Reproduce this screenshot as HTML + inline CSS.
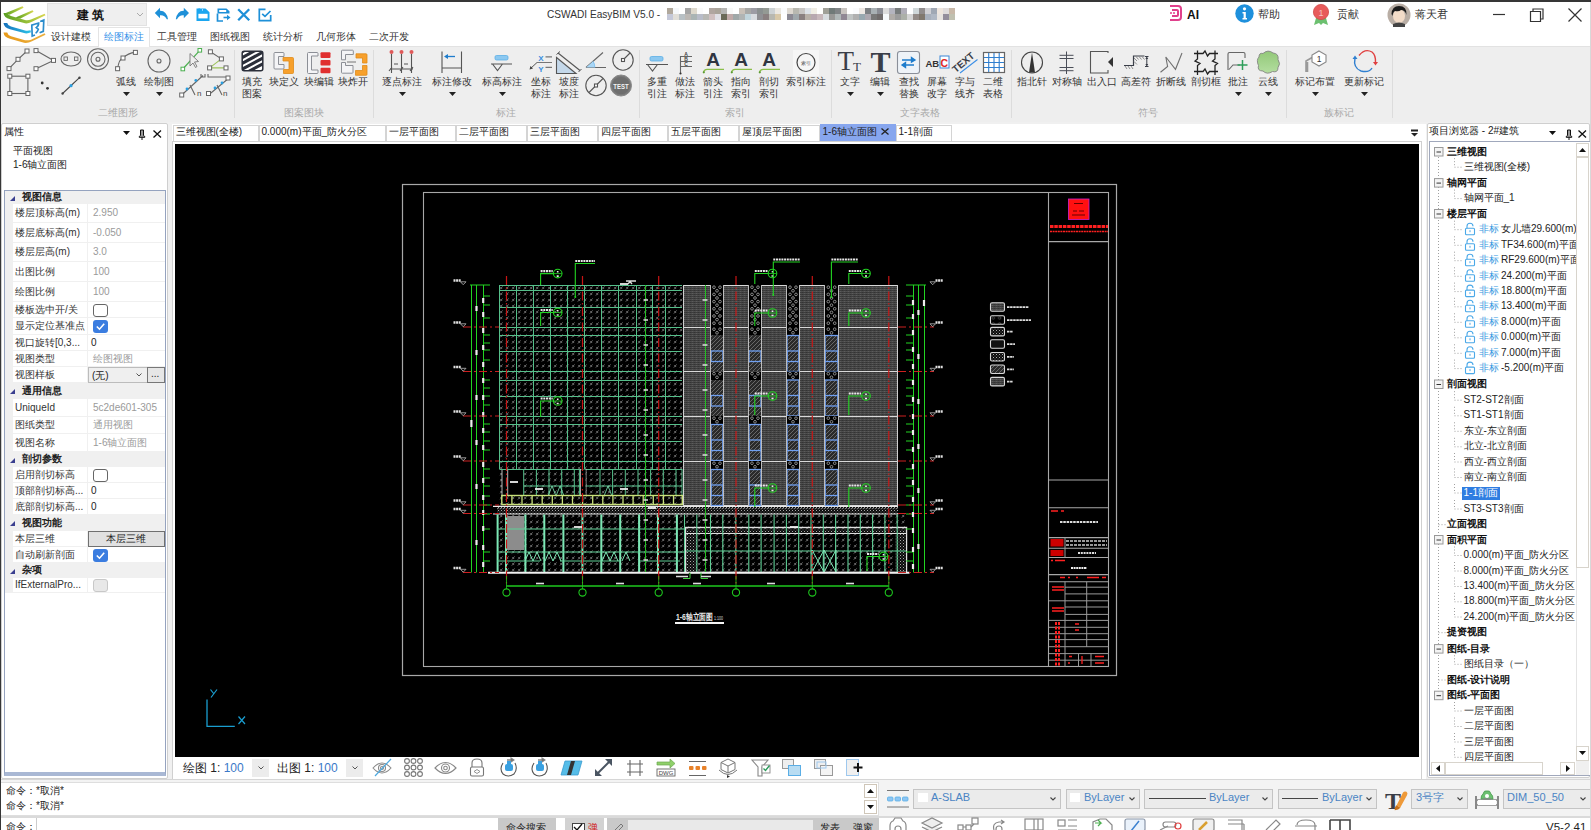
<!DOCTYPE html>
<html><head><meta charset="utf-8">
<style>
*{box-sizing:border-box}
html,body{margin:0;padding:0}
body{width:1591px;height:830px;overflow:hidden;position:relative;background:#f0f0f0;font-family:"Liberation Sans",sans-serif;font-size:12px;color:#222}
.a{position:absolute}
.t{position:absolute;white-space:nowrap;line-height:1}
svg{position:absolute;overflow:visible}
.rl{font-size:10px;color:#333}
.gl{font-size:10px;color:#a8a8a8}

</style></head><body>
<!-- window borders -->
<div class="a" style="left:0;top:0;width:1591px;height:2px;background:#363636;z-index:50"></div>
<div class="a" style="left:0;top:0;width:1px;height:830px;background:#363636;z-index:50"></div>
<div class="a" style="left:1590px;top:2px;width:1px;height:828px;background:#d8d8d8;z-index:50"></div>

<!-- title + tabs white area -->
<div class="a" style="left:0;top:2px;width:1591px;height:44px;background:#fff"></div>
<!-- ribbon body -->
<div class="a" style="left:0;top:46px;width:1591px;height:76px;background:#eeeeee;border-top:1px solid #e2e2e2"></div>


<!-- ===== TITLE BAR ===== -->
<svg style="left:0;top:0" width="50" height="46" viewBox="0 0 50 46">
 <defs>
  <linearGradient id="lg1" x1="0" x2="1"><stop offset="0" stop-color="#5a9e22"/><stop offset="0.6" stop-color="#9cc23a"/><stop offset="1" stop-color="#d9d650"/></linearGradient>
  <linearGradient id="lg2" x1="0" x2="1"><stop offset="0" stop-color="#1670bb"/><stop offset="1" stop-color="#2cc4e8"/></linearGradient>
  <linearGradient id="lg3" x1="0" x2="1"><stop offset="0" stop-color="#e89a18"/><stop offset="1" stop-color="#eab040"/></linearGradient>
 </defs>
 <path d="M3.5,13 Q4,17.8 10,19.3 L25,23.3 Q28,23.8 32,21.8 L45.5,15.2 L44.6,13.8 L31,19.6 Q28,20.6 25,20.1 L11,16 Q8,15 7.2,13 Z" fill="url(#lg1)"/>
 <path d="M4.5,13.5 L22.5,6.2 L23.6,7.8 L9.5,14.8 Z" fill="url(#lg1)"/>
 <path d="M15.5,17.6 L32.5,10.2 L33.6,11.8 L20,18.8 Z" fill="url(#lg1)"/>
 <path d="M3.5,23 Q4,27.8 10,29.3 L25,33.3 Q28,33.8 31,32.3 L30.5,30.3 Q28,31.1 25,30.6 L11,26.6 Q7.8,25.6 7.2,23 Z" fill="url(#lg2)"/>
 <path d="M3.5,32.5 Q4,37.3 10,38.8 L24,42.8 Q28,43.3 32,41.3 L45.5,34.7 L44.6,33.3 L31,39.7 Q28,40.7 25,40.2 L11,36.2 Q7.8,35.2 7.2,32.5 Z" fill="url(#lg3)"/>
 <path d="M34.5,24.2 L31.8,25.2 L32.2,36 L35,35 M34.5,24.2 L38.6,23 Q38.8,26 36.3,27.6 L38.3,29.3 Q37.5,32.2 35.6,33.2 M40.2,21.5 L43.8,20 L43.3,31.3 L39.6,32.8" fill="none" stroke="#2a8ccc" stroke-width="1.7"/>
</svg>
<div class="a" style="left:47px;top:3px;width:100px;height:23px;background:#efefef;border:1px solid #e2e2e2"></div>
<div class="t" style="left:77px;top:9px;font-size:12px;font-weight:bold;color:#111;letter-spacing:3px">建筑</div>
<svg style="left:136px;top:12px" width="8" height="5"><path d="M1,1 L4,4 L7,1" fill="none" stroke="#aaa" stroke-width="1"/></svg>
<!-- quick access -->
<svg style="left:150px;top:2px" width="130" height="24" viewBox="150 2 130 24">
 <g fill="#1e90d8">
  <path d="M154.8,13 L160,7.8 L160,10.8 Q166.5,10.5 168,19.3 L166.8,19.3 Q164.5,14.8 160,15.3 L160,18.2 Z"/>
  <path d="M189,13 L183.8,7.8 L183.8,10.8 Q177.3,10.5 175.8,19.3 L177,19.3 Q179.3,14.8 183.8,15.3 L183.8,18.2 Z"/>
 </g>
 <path d="M196.5,8.5 L205.5,8.5 L209.5,12.3 L209.5,21 L196.5,21 Z" fill="#1aa6f0"/>
 <rect x="198.4" y="13.8" width="9.2" height="4.6" fill="#fff"/>
 <rect x="198.4" y="8.5" width="1.6" height="3.5" fill="#1aa6f0"/>
 <rect x="202" y="9" width="1" height="1.8" fill="#a8d8ff"/>
 <path d="M217.5,8.5 L226.5,8.5 L229.5,11.3 L229.5,13.5 L217.5,13.5 Z" fill="#1e90d8"/>
 <rect x="219.2" y="10" width="7" height="2" fill="#fff"/>
 <path d="M217.5,13.5 L217.5,21 L223,21" fill="none" stroke="#1e90d8" stroke-width="1.7"/>
 <path d="M223.5,17.5 L228,17.5" stroke="#1e90d8" stroke-width="1.6"/>
 <path d="M227,14.8 L230.5,17.5 L227,20.2 Z" fill="#1e90d8"/>
 <path d="M238.2,9.3 L249.2,20.3 M249.2,9.3 L238.2,20.3" stroke="#1e90d8" stroke-width="2.3"/>
 <path d="M265.5,9.3 L259.3,9.3 L259.3,20.7 L270.7,20.7 L270.7,15" fill="none" stroke="#1e90d8" stroke-width="1.7"/>
 <path d="M262.2,13.8 L265,16.3 L270.5,11" fill="none" stroke="#1e90d8" stroke-width="1.7"/>
</svg>
<!-- title -->
<div class="t" style="left:547px;top:9px;font-size:11.5px;color:#333;transform:scaleX(0.88);transform-origin:0 0">CSWADI EasyBIM V5.0 -</div>
<svg style="left:667px;top:8px" width="288" height="12" shape-rendering="crispEdges"><rect x="0" y="0" width="6" height="6" fill="#b0a89c"/><rect x="0" y="6" width="6" height="6" fill="#c4c8d8"/><rect x="6" y="0" width="6" height="6" fill="#f5f8fb"/><rect x="6" y="6" width="6" height="6" fill="#e0ded8"/><rect x="12" y="0" width="6" height="6" fill="#fff"/><rect x="12" y="6" width="6" height="6" fill="#b8c0c4"/><rect x="18" y="0" width="6" height="6" fill="#a5a5a5"/><rect x="18" y="6" width="6" height="6" fill="#bcb8b4"/><rect x="24" y="0" width="6" height="6" fill="#ddd8cc"/><rect x="24" y="6" width="6" height="6" fill="#aab4b4"/><rect x="30" y="0" width="6" height="6" fill="#fafafa"/><rect x="30" y="6" width="6" height="6" fill="#b8bcc8"/><rect x="36" y="0" width="6" height="6" fill="#fff"/><rect x="36" y="6" width="6" height="6" fill="#b8b8b4"/><rect x="42" y="0" width="6" height="6" fill="#b0a6a0"/><rect x="42" y="6" width="6" height="6" fill="#d0c0c0"/><rect x="48" y="0" width="6" height="6" fill="#aaa49a"/><rect x="48" y="6" width="6" height="6" fill="#e0e0e6"/><rect x="54" y="0" width="6" height="6" fill="#b5b5b3"/><rect x="54" y="6" width="6" height="6" fill="#6a6a58"/><rect x="60" y="0" width="6" height="6" fill="#f8f9f8"/><rect x="60" y="6" width="6" height="6" fill="#c0aaa8"/><rect x="66" y="0" width="6" height="6" fill="#fff"/><rect x="66" y="6" width="6" height="6" fill="#a0a8a8"/><rect x="72" y="0" width="6" height="6" fill="#c8c0b8"/><rect x="72" y="6" width="6" height="6" fill="#b0b4b4"/><rect x="78" y="0" width="6" height="6" fill="#a8a8a6"/><rect x="78" y="6" width="6" height="6" fill="#c0d4dc"/><rect x="84" y="0" width="6" height="6" fill="#9c9ca4"/><rect x="84" y="6" width="6" height="6" fill="#d8dce0"/><rect x="90" y="0" width="6" height="6" fill="#8a9090"/><rect x="90" y="6" width="6" height="6" fill="#909094"/><rect x="96" y="0" width="6" height="6" fill="#949a94"/><rect x="96" y="6" width="6" height="6" fill="#8a8080"/><rect x="102" y="0" width="6" height="6" fill="#cdd2d4"/><rect x="102" y="6" width="6" height="6" fill="#b8b8b0"/><rect x="108" y="0" width="6" height="6" fill="#ebe8e2"/><rect x="108" y="6" width="6" height="6" fill="#d8c8a8"/><rect x="114" y="0" width="6" height="6" fill="#fbfcfd"/><rect x="114" y="6" width="6" height="6" fill="#fff"/><rect x="120" y="0" width="6" height="6" fill="#ddd8d0"/><rect x="120" y="6" width="6" height="6" fill="#8c8a94"/><rect x="126" y="0" width="6" height="6" fill="#b8b8b0"/><rect x="126" y="6" width="6" height="6" fill="#a0a8ac"/><rect x="132" y="0" width="6" height="6" fill="#c8c6c4"/><rect x="132" y="6" width="6" height="6" fill="#8a8080"/><rect x="138" y="0" width="6" height="6" fill="#dde2e8"/><rect x="138" y="6" width="6" height="6" fill="#b8b0a8"/><rect x="144" y="0" width="6" height="6" fill="#f0ede4"/><rect x="144" y="6" width="6" height="6" fill="#b8a8b0"/><rect x="150" y="0" width="6" height="6" fill="#fff"/><rect x="150" y="6" width="6" height="6" fill="#c8b8bc"/><rect x="156" y="0" width="6" height="6" fill="#a0a098"/><rect x="156" y="6" width="6" height="6" fill="#d8dce0"/><rect x="162" y="0" width="6" height="6" fill="#707a78"/><rect x="162" y="6" width="6" height="6" fill="#989896"/><rect x="168" y="0" width="6" height="6" fill="#808486"/><rect x="168" y="6" width="6" height="6" fill="#b0b8b8"/><rect x="174" y="0" width="6" height="6" fill="#c8c4c0"/><rect x="174" y="6" width="6" height="6" fill="#908894"/><rect x="180" y="0" width="6" height="6" fill="#fff"/><rect x="180" y="6" width="6" height="6" fill="#c0c4c4"/><rect x="186" y="0" width="6" height="6" fill="#fafbfd"/><rect x="186" y="6" width="6" height="6" fill="#b0b0b0"/><rect x="192" y="0" width="6" height="6" fill="#ede8e4"/><rect x="192" y="6" width="6" height="6" fill="#98a8b0"/><rect x="198" y="0" width="6" height="6" fill="#7c8084"/><rect x="198" y="6" width="6" height="6" fill="#aca8b0"/><rect x="204" y="0" width="6" height="6" fill="#a8b0b4"/><rect x="204" y="6" width="6" height="6" fill="#787878"/><rect x="210" y="0" width="6" height="6" fill="#8a8c94"/><rect x="210" y="6" width="6" height="6" fill="#706c6c"/><rect x="216" y="0" width="6" height="6" fill="#dcdcdc"/><rect x="216" y="6" width="6" height="6" fill="#f6f9fb"/><rect x="222" y="0" width="6" height="6" fill="#b4b4be"/><rect x="222" y="6" width="6" height="6" fill="#b0aca8"/><rect x="228" y="0" width="6" height="6" fill="#787c7c"/><rect x="228" y="6" width="6" height="6" fill="#9c9c9c"/><rect x="234" y="0" width="6" height="6" fill="#b0aeb8"/><rect x="234" y="6" width="6" height="6" fill="#acb0a8"/><rect x="240" y="0" width="6" height="6" fill="#fff"/><rect x="240" y="6" width="6" height="6" fill="#d4d4d4"/><rect x="246" y="0" width="6" height="6" fill="#d0d8da"/><rect x="246" y="6" width="6" height="6" fill="#948c88"/><rect x="252" y="0" width="6" height="6" fill="#908c8c"/><rect x="252" y="6" width="6" height="6" fill="#80786e"/><rect x="258" y="0" width="6" height="6" fill="#d0d0d4"/><rect x="258" y="6" width="6" height="6" fill="#a8b0bc"/><rect x="264" y="0" width="6" height="6" fill="#a0a8b4"/><rect x="264" y="6" width="6" height="6" fill="#b0b8c4"/><rect x="270" y="0" width="6" height="6" fill="#efe6de"/><rect x="270" y="6" width="6" height="6" fill="#e8e4e0"/><rect x="276" y="0" width="6" height="6" fill="#e0dcdc"/><rect x="276" y="6" width="6" height="6" fill="#948e9c"/><rect x="282" y="0" width="6" height="6" fill="#c8b8a8"/><rect x="282" y="6" width="6" height="6" fill="#c0c0b0"/></svg>
<!-- right title items -->
<svg style="left:1167px;top:4px" width="16" height="18" viewBox="0 0 16 18"><path d="M3,2 L11,2 Q14,2 14,5 L14,13 Q14,16 11,16 L3,16 M5,6 L10,6 Q11,6 11,7 L11,11 Q11,12 10,12 L5,12" fill="none" stroke="#e0408c" stroke-width="2"/><circle cx="4" cy="9" r="1" fill="#e0408c"/><circle cx="7" cy="9" r="1" fill="#e0408c"/></svg>
<div class="t" style="left:1187px;top:9px;font-size:12px;font-weight:bold;color:#111">AI</div>
<svg style="left:1235px;top:4px" width="19" height="19" viewBox="0 0 19 19"><circle cx="9.5" cy="9.5" r="9.2" fill="#1e90dc"/><circle cx="9.5" cy="4.8" r="1.6" fill="#fff"/><path d="M7.5,8 L10.8,8 L10.8,14 L12,14 L12,15.5 L7.5,15.5 L7.5,14 L8.6,14 L8.6,9.5 L7.5,9.5 Z" fill="#fff"/></svg>
<div class="t" style="left:1258px;top:9px;font-size:11px;color:#333">帮助</div>
<svg style="left:1311px;top:3px" width="20" height="23" viewBox="0 0 20 23"><path d="M5,15 L3,22 L8,20 L10,22 L12,20 L17,22 L15,15 Z" fill="#6cc070"/><circle cx="10" cy="9" r="7.6" fill="#e85b5b" stroke="#d04a4a" stroke-width="0.8"/><text x="10" y="12.5" font-size="9" fill="#f5c0c0" text-anchor="middle" font-family="Liberation Sans">1</text></svg>
<div class="t" style="left:1337px;top:9px;font-size:11px;color:#333">贡献</div>
<svg style="left:1387px;top:3px" width="24" height="24" viewBox="0 0 24 24"><circle cx="12" cy="12" r="11.5" fill="#b9aea5"/><ellipse cx="12" cy="13" rx="6" ry="7" fill="#f3dcc8"/><path d="M4.5,11 Q5,3 12,3 Q20,3 19.5,12 Q18,7 14,7 Q12,9 8,8 Q6,9 5.5,13 Z" fill="#1b1b1b"/><path d="M6,21 Q12,18 18,21 L18,24 L6,24 Z" fill="#444"/></svg>
<div class="t" style="left:1415px;top:9px;font-size:11px;color:#333">蒋天君</div>
<svg style="left:1490px;top:6px" width="96" height="18" viewBox="0 0 96 18">
 <path d="M3,8.5 L15,8.5" stroke="#333" stroke-width="1.2"/>
 <path d="M40.5,5.5 L50.5,5.5 L50.5,15.5 L40.5,15.5 Z M43,5.5 L43,3 L53,3 L53,13 L50.5,13" fill="none" stroke="#333" stroke-width="1.2"/>
 <path d="M78.5,2.5 L91.5,15.5 M91.5,2.5 L78.5,15.5" stroke="#333" stroke-width="1.2"/>
</svg>
<!-- ribbon tabs -->
<div class="t" style="left:51px;top:32px;font-size:10px;color:#333">设计建模</div>
<div class="a" style="left:98px;top:27px;width:52px;height:20px;background:#fff;border:1px solid #e4e4e4;border-bottom:none"></div>
<div class="t" style="left:104px;top:32px;font-size:10px;color:#2f8fe8">绘图标注</div>
<div class="t" style="left:157px;top:32px;font-size:10px;color:#333">工具管理</div>
<div class="t" style="left:210px;top:32px;font-size:10px;color:#333">图纸视图</div>
<div class="t" style="left:263px;top:32px;font-size:10px;color:#333">统计分析</div>
<div class="t" style="left:316px;top:32px;font-size:10px;color:#333">几何形体</div>
<div class="t" style="left:369px;top:32px;font-size:10px;color:#333">二次开发</div>

<!-- ===== RIBBON ===== -->
<svg style="left:0;top:0" width="1591" height="125" viewBox="0 0 1591 125">
<defs>
 <g id="sq"><rect x="-2" y="-2" width="4" height="4" fill="#fff" stroke="#666" stroke-width="1"/></g>
</defs>
<g fill="none" stroke="#666" stroke-width="1.1">
 <!-- 1 polyline -->
 <path d="M9,68.6 L18,59.3 L27,51"/>
 <!-- 2 multiline -->
 <path d="M36,50.6 L53.5,60.4 L36,68.7"/>
 <!-- 3 ellipse -->
 <ellipse cx="71" cy="59" rx="10" ry="7"/>
 <!-- 4 concentric -->
 <circle cx="98" cy="59.3" r="10.5"/><circle cx="98" cy="59.3" r="7"/><circle cx="98" cy="59.3" r="2"/>
 <!-- 5 arc -->
 <path d="M117.6,68.7 Q119,59 123,58 Q128,53 135.4,52.4"/>
 <!-- 6 circle -->
 <circle cx="159" cy="61" r="11"/><circle cx="159" cy="61" r="2"/>
 <!-- 9 rect -->
 <rect x="9.8" y="76.2" width="18.1" height="17.3"/>
 <!-- 11 line -->
 <path d="M62.6,93.5 L79.5,77.7" stroke="#444"/>
 <!-- 12,13 dims -->
 <path d="M181.7,95 L203,75.5 M190,85 L195,95 M201,74 L201,77 L205,77 L205,74" />
 <path d="M208.5,95 L229,78 M217,85 L222,95 M208,74 L208,77 L229,77" />
</g>
<g>
 <use href="#sq" x="9" y="68.6"/><use href="#sq" x="18" y="59.3"/><use href="#sq" x="27" y="51"/>
 <use href="#sq" x="36" y="50.6"/><use href="#sq" x="53.5" y="60.4"/><use href="#sq" x="36" y="68.7"/>
 <rect x="64" y="57" width="3.4" height="3.4" fill="none" stroke="#666" stroke-width="0.9"/><rect x="74.5" y="57" width="3.4" height="3.4" fill="none" stroke="#666" stroke-width="0.9"/>
 <use href="#sq" x="117.6" y="68.7"/><use href="#sq" x="123" y="58"/><use href="#sq" x="135.4" y="52.4"/>
 <use href="#sq" x="9.8" y="76.2"/><use href="#sq" x="27.9" y="76.2"/><use href="#sq" x="9.8" y="93.5"/><use href="#sq" x="27.9" y="93.5"/>
 <circle cx="42.2" cy="83" r="1.4" fill="#333"/><circle cx="47.5" cy="88.3" r="1.4" fill="#333"/>
 <circle cx="62.6" cy="93.5" r="1.2" fill="#444"/><circle cx="79.5" cy="77.7" r="1.2" fill="#444"/><circle cx="71" cy="85.7" r="1.6" fill="#2a9ee0"/>
 <!-- 7 green line with cursor -->
 <path d="M182.8,69 L199.8,50.3" stroke="#4caf50" stroke-width="1.2"/>
 <rect x="181" y="67.2" width="3.6" height="3.6" fill="#fff" stroke="#4caf50"/><rect x="198" y="48.5" width="3.6" height="3.6" fill="#fff" stroke="#4caf50"/>
 <path d="M190,53.5 L190,66 L193,63 L195.5,67.5 L197,66.5 L194.5,62 L198.5,61.5 Z" fill="#eee" stroke="#777" stroke-width="0.9"/>
 <!-- 8 zigzag -->
 <path d="M210.4,51.8 L221.4,58.9" stroke="#666" stroke-width="1.1"/>
 <path d="M221.4,58.9 L209.6,67.9 L226,67.9" stroke="#9cc25a" stroke-width="1.1" fill="none"/>
 <use href="#sq" x="210.4" y="51.8"/><use href="#sq" x="221.4" y="58.9"/><use href="#sq" x="209.6" y="67.9"/><use href="#sq" x="226" y="67.9"/>
 <!-- 12/13 extras -->
 <use href="#sq" x="181.7" y="95"/><circle cx="187" cy="89" r="1.4" fill="#2a9ee0"/><circle cx="195.8" cy="80.4" r="1.4" fill="#2a9ee0"/>
 <text x="197" y="96" font-size="8" font-family="Liberation Sans" fill="#444">n</text>
 <use href="#sq" x="208.5" y="93.5"/><use href="#sq" x="228" y="78"/><circle cx="215" cy="88" r="1.4" fill="#2a9ee0"/><circle cx="222" cy="83" r="1.4" fill="#2a9ee0"/>
 <text x="223" y="96" font-size="8" font-family="Liberation Sans" fill="#444">n</text>
</g>
<!-- Group 2 -->
<g>
 <clipPath id="hc"><rect x="242" y="51" width="21" height="20" rx="2"/></clipPath>
 <rect x="242" y="51" width="21" height="20" rx="2" fill="#fff"/>
 <g clip-path="url(#hc)" stroke="#2b2f3a" stroke-width="3.1"><path d="M236,49.3 L270,30.9 M236,55.1 L270,36.7 M236,60.9 L270,42.5 M236,66.7 L270,48.3 M236,72.5 L270,54.1 M236,78.3 L270,59.9"/></g>
 <rect x="242.2" y="51.2" width="20.6" height="19.6" rx="2" fill="none" stroke="#2b2f3a" stroke-width="1.5"/>
 <!-- 块定义 -->
 <path d="M274,53.5 Q274,52.5 275,52.5 L283,52.5 Q284,52.5 284,53.5 L284,56.5 L278.5,56.5 L278.5,64.5 L284,64.5 L284,68 Q284,69 283,69 L275,69 Q274,69 274,68 Z" fill="#f4f4f6" stroke="#8c8f96" stroke-width="1"/>
 <path d="M283,57.5 L292.5,57.5 Q293.5,57.5 293.5,58.5 L293.5,72.5 Q293.5,73.5 292.5,73.5 L283.5,73.5 L283.5,69.5 L289,69.5 L289,61 L283,61 Z" fill="#f7a02c" stroke="#e08a18" stroke-width="0.8"/>
 <!-- 块编辑 -->
 <path d="M307.5,53.5 Q307.5,52.5 308.5,52.5 L317,52.5 Q318,52.5 318,53.5 L318,56 L311.5,56 L311.5,70 L318,70 L318,72.5 Q318,73.5 317,73.5 L308.5,73.5 Q307.5,73.5 307.5,72.5 Z" fill="#f4f4f6" stroke="#8c8f96" stroke-width="1"/>
 <rect x="320.5" y="52.3" width="10" height="5.6" rx="1" fill="#e03030"/><rect x="320.5" y="60" width="10" height="5.6" rx="1" fill="#e03030"/><rect x="320.5" y="67.7" width="10" height="5.6" rx="1" fill="#e03030"/>
 <!-- 块炸开 -->
 <path d="M341.5,51 Q341.5,50.2 342.3,50.2 L352.5,50.2 Q353.3,50.2 353.3,51 L353.3,54.5 L345.5,54.5 L345.5,59.8 L341.5,59.8 Z" fill="#f4f4f6" stroke="#8c8f96" stroke-width="1"/>
 <path d="M341.5,62.5 L345.5,62.5 L345.5,65.5 L353,65.5 L353,72.5 Q353,73.2 352.3,73.2 L342.3,73.2 Q341.5,73.2 341.5,72.5 Z" fill="#f4f4f6" stroke="#8c8f96" stroke-width="1"/>
 <path d="M347,62 L356,62" stroke="#666" stroke-width="0.9"/>
 <path d="M356,53.8 L366,53.8 Q367,53.8 367,54.8 L367,63 L362.5,63 L362.5,58 L356,58 Z" fill="#f7a02c" stroke="#e08a18" stroke-width="0.8"/>
 <path d="M362.5,65.5 L367,65.5 L367,74.5 Q367,75.3 366.2,75.3 L355.5,75.3 L355.5,70.5 L362.5,70.5 Z" fill="#f7a02c" stroke="#e08a18" stroke-width="0.8"/>
</g>
<!-- Group 3 标注 -->
<g fill="none" stroke="#555" stroke-width="1.1">
 <path d="M391.5,54 L391.5,73 M401.5,54 L401.5,73 M411.5,54 L411.5,73 M390,69 L413,69 M389,71 L392,67 M400,71 L403,67 M410,71 L413,67 M394,64 L398,64 M404,64 L408,64"/>
 <circle cx="391.5" cy="52" r="2" fill="#e05a5a" stroke="none"/><circle cx="401.5" cy="52" r="2" fill="#e05a5a" stroke="none"/><circle cx="411.5" cy="52" r="2" fill="#e05a5a" stroke="none"/>
 <path d="M442,51.5 L442,73 M461.5,51.5 L461.5,73 M442,68 L461.5,68"/>
 <path d="M446,56.5 L455,56.5" stroke="#1e7ccc" stroke-width="1.3"/><path d="M444,56.5 L448,54 L448,59 Z" fill="#1e7ccc" stroke="none"/>
 <!-- 标高 -->
 <rect x="495" y="55.5" width="13" height="4.5" rx="1.5" fill="#8cc8f0" stroke="#5aaee6" stroke-width="0.8"/>
 <path d="M491,64 L512,64 M492.5,64 L497.5,70.5 L502.5,64"/>
 <!-- 坐标 -->
 <path d="M545.5,56.8 H552 M537,62.5 H552 M545.5,67.3 H552" stroke="#777" stroke-width="1.2"/>
 <path d="M530,69 L537,62.5" stroke="#555" stroke-width="1"/>
 <path d="M529.5,69.5 L530.5,66 L533,68.5 Z" fill="#444" stroke="none"/>
 <text x="540.8" y="61.3" font-size="8" font-weight="bold" font-family="Liberation Sans" fill="#3a8ee0" stroke="none" text-anchor="middle">X</text>
 <text x="540.8" y="71.6" font-size="8" font-weight="bold" font-family="Liberation Sans" fill="#3a8ee0" stroke="none" text-anchor="middle">Y</text>
 <!-- 坡度 -->
 <path d="M556.5,57.5 L556.5,73.5 L576,73.5 Z" fill="#c4d8ea" stroke="#555" stroke-width="1.1"/>
 <path d="M558,53 L580,70.5" stroke="#555" stroke-width="1.1"/>
 <path d="M556.5,54.5 L560,51.5 M578.5,72 L581.5,69" stroke="#555" stroke-width="1"/>
 <!-- angle -->
 <path d="M586,67.5 L606,67.5 M586,67.5 L603,52.5" stroke="#666" stroke-width="1.1"/>
 <path d="M586,67.5 L593,61.3 Q595,64 594.8,67.5 Z" fill="#a8d6f6" stroke="none"/>
 <path d="M593,61.3 Q595,64 594.8,67.5" fill="none" stroke="#7cc0f0" stroke-width="0.9"/>
<!-- radius circle -->
 <circle cx="623" cy="60" r="10.2" stroke="#555"/><path d="M623,60 L630,53"/><rect x="621.5" y="58.5" width="3" height="3" fill="#fff"/>
 <!-- diameter circle -->
 <circle cx="596" cy="85.5" r="10.2"/><path d="M589,92.5 L603,78.5"/><rect x="594.5" y="84" width="3" height="3" fill="#fff"/>
 <!-- TEST -->
 <circle cx="621" cy="85.5" r="10.5" fill="#7a7a7a" stroke="#888" stroke-width="1"/><circle cx="621" cy="85.5" r="8.8" fill="#6e6e6e" stroke="none"/>
 <text x="621" y="88.6" font-size="7.5" font-weight="bold" font-family="Liberation Sans" fill="#f4f4f4" stroke="none" text-anchor="middle" transform="translate(621 0) scale(0.8 1) translate(-621 0)">TEST</text>
</g>
<!-- Group 4 索引 -->
<g fill="none" stroke="#555" stroke-width="1.1">
 <rect x="650" y="56.5" width="13" height="4.5" rx="1.5" fill="#8cc8f0" stroke="#5aaee6" stroke-width="0.8"/>
 <path d="M646,64.5 L668,64.5 M647.5,64.5 L652.5,71 L657.5,64.5"/>
 <path d="M680.5,56 L680.5,73 M680.5,56.5 L692,56.5 M680.5,61.5 L692,61.5 M680.5,66.5 L692,66.5" stroke="#666"/>
 <circle cx="680.5" cy="73.5" r="1.1" fill="#333" stroke="none"/>
 <text x="686" y="56" font-size="5" font-weight="bold" font-family="Liberation Sans" fill="#444" stroke="none" text-anchor="middle">A</text>
 <text x="686" y="61" font-size="5" font-weight="bold" font-family="Liberation Sans" fill="#444" stroke="none" text-anchor="middle">B</text>
 <text x="686" y="66" font-size="5" font-weight="bold" font-family="Liberation Sans" fill="#444" stroke="none" text-anchor="middle">C</text>
 <path d="M703.5,72.5 Q704,69.3 707,69.3 L724,69.3 M731.5,72.5 Q732,69.3 735,69.3 L752,69.3 M759.5,72.5 Q760,69.3 763,69.3 L780,69.3" stroke="#8bbf4a" stroke-width="1.2"/>
 <circle cx="703.8" cy="72.3" r="1.1" fill="#5a9a30" stroke="none"/><circle cx="731.8" cy="72.3" r="1.1" fill="#5a9a30" stroke="none"/><circle cx="759.8" cy="72.3" r="1.1" fill="#5a9a30" stroke="none"/>
 <text x="713" y="66" font-size="19" font-weight="bold" font-family="Liberation Sans" fill="#2f3542" stroke="none" text-anchor="middle">A</text>
 <text x="741" y="66" font-size="19" font-weight="bold" font-family="Liberation Sans" fill="#2f3542" stroke="none" text-anchor="middle">A</text>
 <text x="769" y="66" font-size="19" font-weight="bold" font-family="Liberation Sans" fill="#2f3542" stroke="none" text-anchor="middle">A</text>
 <rect x="793" y="50" width="26" height="26" fill="#f6f6f6" stroke="none"/>
 <circle cx="806" cy="62.5" r="9" stroke="#444" stroke-width="1.2"/>
 <text x="806" y="64.5" font-size="5" font-family="Liberation Sans" fill="#555" stroke="none" text-anchor="middle">索引</text>
</g>
<!-- Group 5 文字表格 -->
<g>
 <text x="837.5" y="70" font-size="27" font-family="Liberation Serif" fill="#3a3e48">T</text>
 <text x="853" y="70.5" font-size="13" font-family="Liberation Serif" fill="#3a3e48">T</text>
 <text x="870.5" y="71.5" font-size="30" font-weight="bold" font-family="Liberation Serif" fill="#3a3e48">T</text>
 <rect x="897.5" y="51.5" width="22" height="22" rx="2.5" fill="#eef3f8" stroke="#8a8f99" stroke-width="1.1"/>
 <path d="M902,60 L915,60 M915,60 L911.5,57.5 L911.5,62 Z M914,65 L902,65 M902,65 L905.5,62.5 L905.5,67.5 Z" stroke="#1e7ccc" stroke-width="1.4" fill="#1e7ccc"/>
 <text x="925.5" y="67" font-size="9.5" font-weight="bold" font-family="Liberation Sans" fill="#333">AB</text>
 <rect x="940" y="56" width="9" height="12" fill="#fff" stroke="#3a86d6" stroke-width="1"/>
 <text x="940.5" y="67" font-size="10.5" font-weight="bold" font-family="Liberation Sans" fill="#e02424">C</text>
 <text x="0" y="0" font-size="10" font-weight="bold" font-family="Liberation Sans" fill="#3a3e48" text-anchor="middle" transform="translate(965.5,65) rotate(-40)">TEXT</text>
 <path d="M960,73 L977.5,59.5" stroke="#3a8ee6" stroke-width="1.1"/>
 <g stroke="#2f7fd0" stroke-width="1.1" fill="none">
  <rect x="983.5" y="52.5" width="21" height="20" stroke="#555" fill="#fff"/>
  <path d="M988.7,52.5 V72.5 M994,52.5 V72.5 M999.2,52.5 V72.5 M983.5,57.5 H1004.5 M983.5,62.5 H1004.5 M983.5,67.5 H1004.5"/>
  <rect x="983.5" y="52.5" width="21" height="20" stroke="#666"/>
 </g>
</g>
<!-- Group 6 符号 -->
<g fill="none" stroke="#444" stroke-width="1.1">
 <circle cx="1032" cy="62.5" r="10.5"/>
 <path d="M1032,52.5 L1035,72.5 L1029,72.5 Z" fill="#333" stroke="none"/>
 <path d="M1066.5,51.5 V74 M1059.5,55.3 H1073.5 M1059.5,58.5 H1073.5 M1059.5,67.5 H1073.5 M1059.5,70.7 H1073.5" stroke="#4a4e58" stroke-width="1"/>
 <path d="M1108,53 L1108,51.5 L1090.5,51.5 L1090.5,73 L1108,73 L1108,70" stroke="#555"/>
 <path d="M1113,57 L1113,67 L1108,62 Z" fill="#333" stroke="none"/>
 <path d="M1124,65.5 H1133.5 V56 H1144.5" stroke="#3a3e48" stroke-width="1.2"/><path d="M1125,66 L1127,69 M1128,66 L1130,69 M1131,66 L1133,69 M1134,58 L1137,61 M1134,61.5 L1137,64.5 M1136,56.5 L1138.5,59.5 M1139,56.5 L1141.5,59.5 M1142,56.5 L1144.5,59.5" stroke="#777" stroke-width="0.8"/><path d="M1146.8,57 V66 M1145,56.5 H1148.5 M1145,66.5 H1148.5" stroke="#3a3e48" stroke-width="1"/><path d="M1145.3,59 L1146.8,57 L1148.3,59 Z M1145.3,64 L1146.8,66 L1148.3,64 Z" fill="#3a3e48" stroke="none"/>
 <path d="M1160.5,72.2 L1167.6,66.5 L1165.8,57 L1175.5,69.3 L1182,53" stroke="#707070" stroke-width="1.1"/>
 <!-- 剖切框 -->
 <path d="M1194,53.5 H1203 L1205,51 L1207.5,56 L1209.5,53.5 H1218 M1194,71.5 H1203 L1205,69 L1207.5,74 L1209.5,71.5 H1218 M1197.5,50.5 V59 L1195,61 L1200,63.5 L1197.5,65.5 V75 M1215,50.5 V59 L1212.5,61 L1217.5,63.5 L1215,65.5 V75" stroke="#222" stroke-width="1.3" fill="none"/>
 <!-- 批注 -->
 <path d="M1228,70 L1228,54 Q1228,52.5 1229.5,52.5 L1243.5,52.5 Q1245,52.5 1245,54 L1245,58 M1240,65 L1233,65 L1229,69.5" stroke="#666"/>
 <path d="M1242.5,60 V70 M1237.5,65 H1247.5" stroke="#2e9e5a" stroke-width="1.5"/>
 <!-- cloud -->
 <defs><linearGradient id="cg" x1="0" y1="0" x2="0" y2="1"><stop offset="0" stop-color="#92c878"/><stop offset="1" stop-color="#b4dea0"/></linearGradient></defs>
 <path d="M1263,53.5 Q1268,49 1273,53 Q1279,53.5 1278,59.5 Q1281,64 1278,67.5 Q1278,73 1272.5,71.5 Q1267,75 1263,71 Q1257,71 1258.5,65.5 Q1256,60 1259,57 Q1259,52.5 1263,53.5 Z" fill="url(#cg)" stroke="#8a8f88" stroke-width="1"/>
</g>
<!-- Group 7 族标记 -->
<g fill="none" stroke="#888" stroke-width="1.1">
 <path d="M1306,72 L1306,61 L1313,57 M1307.5,72 L1307.5,62" stroke="#999" stroke-width="1.6"/>
 <path d="M1319,51 L1326,55 L1326,62 L1319,66 L1312,62 L1312,55 Z" fill="#fff" stroke="#888"/>
 <text x="1319" y="62" font-size="8.5" font-family="Liberation Sans" fill="#333" stroke="none" text-anchor="middle">1</text>
 <path d="M1359,55.5 Q1365,48 1372,52 Q1376,55 1375.5,63" stroke="#e04040" stroke-width="1.4"/>
 <path d="M1373,62 L1378,62 L1375.5,65.5 Z" fill="#e04040" stroke="none"/>
 <path d="M1355,58 Q1353,68 1361,71 Q1369,73 1372,68" stroke="#2f7fd0" stroke-width="1.4"/>
 <path d="M1352.5,59 L1357.5,59 L1355,55.5 Z" fill="#2f7fd0" stroke="none"/>
</g>
</svg>

<div class="t rl" style="left:116.0px;top:77px">弧线</div>
<svg style="left:122.5px;top:92px" width="7" height="4"><path d="M0,0 L7,0 L3.5,4 Z" fill="#222"/></svg>
<div class="t rl" style="left:144.0px;top:77px">绘制图</div>
<svg style="left:155.5px;top:92px" width="7" height="4"><path d="M0,0 L7,0 L3.5,4 Z" fill="#222"/></svg>
<div class="t rl" style="left:242.0px;top:77px">填充</div>
<div class="t rl" style="left:242.0px;top:89px">图案</div>
<div class="t rl" style="left:268.5px;top:77px">块定义</div>
<div class="t rl" style="left:304.0px;top:77px">块编辑</div>
<div class="t rl" style="left:338.0px;top:77px">块炸开</div>
<div class="t rl" style="left:382.0px;top:77px">逐点标注</div>
<svg style="left:398.5px;top:92px" width="7" height="4"><path d="M0,0 L7,0 L3.5,4 Z" fill="#222"/></svg>
<div class="t rl" style="left:432.0px;top:77px">标注修改</div>
<svg style="left:448.5px;top:92px" width="7" height="4"><path d="M0,0 L7,0 L3.5,4 Z" fill="#222"/></svg>
<div class="t rl" style="left:482.0px;top:77px">标高标注</div>
<svg style="left:498.5px;top:92px" width="7" height="4"><path d="M0,0 L7,0 L3.5,4 Z" fill="#222"/></svg>
<div class="t rl" style="left:531.0px;top:77px">坐标</div>
<div class="t rl" style="left:531.0px;top:89px">标注</div>
<div class="t rl" style="left:559.0px;top:77px">坡度</div>
<div class="t rl" style="left:559.0px;top:89px">标注</div>
<div class="t rl" style="left:647.0px;top:77px">多重</div>
<div class="t rl" style="left:647.0px;top:89px">引注</div>
<div class="t rl" style="left:675.0px;top:77px">做法</div>
<div class="t rl" style="left:675.0px;top:89px">标注</div>
<div class="t rl" style="left:703.0px;top:77px">箭头</div>
<div class="t rl" style="left:703.0px;top:89px">引注</div>
<div class="t rl" style="left:731.0px;top:77px">指向</div>
<div class="t rl" style="left:731.0px;top:89px">索引</div>
<div class="t rl" style="left:759.0px;top:77px">剖切</div>
<div class="t rl" style="left:759.0px;top:89px">索引</div>
<div class="t rl" style="left:786.0px;top:77px">索引标注</div>
<div class="t rl" style="left:840.0px;top:77px">文字</div>
<svg style="left:846.5px;top:92px" width="7" height="4"><path d="M0,0 L7,0 L3.5,4 Z" fill="#222"/></svg>
<div class="t rl" style="left:870.0px;top:77px">编辑</div>
<svg style="left:876.5px;top:92px" width="7" height="4"><path d="M0,0 L7,0 L3.5,4 Z" fill="#222"/></svg>
<div class="t rl" style="left:899.0px;top:77px">查找</div>
<div class="t rl" style="left:899.0px;top:89px">替换</div>
<div class="t rl" style="left:927.0px;top:77px">屏幕</div>
<div class="t rl" style="left:927.0px;top:89px">改字</div>
<div class="t rl" style="left:955.0px;top:77px">字与</div>
<div class="t rl" style="left:955.0px;top:89px">线齐</div>
<div class="t rl" style="left:983.0px;top:77px">二维</div>
<div class="t rl" style="left:983.0px;top:89px">表格</div>
<div class="t rl" style="left:1016.5px;top:77px">指北针</div>
<div class="t rl" style="left:1051.5px;top:77px">对称轴</div>
<div class="t rl" style="left:1086.5px;top:77px">出入口</div>
<div class="t rl" style="left:1121.0px;top:77px">高差符</div>
<div class="t rl" style="left:1156.0px;top:77px">折断线</div>
<div class="t rl" style="left:1191.0px;top:77px">剖切框</div>
<div class="t rl" style="left:1228.0px;top:77px">批注</div>
<svg style="left:1234.5px;top:92px" width="7" height="4"><path d="M0,0 L7,0 L3.5,4 Z" fill="#222"/></svg>
<div class="t rl" style="left:1258.0px;top:77px">云线</div>
<svg style="left:1264.5px;top:92px" width="7" height="4"><path d="M0,0 L7,0 L3.5,4 Z" fill="#222"/></svg>
<div class="t rl" style="left:1295.0px;top:77px">标记布置</div>
<svg style="left:1311.5px;top:92px" width="7" height="4"><path d="M0,0 L7,0 L3.5,4 Z" fill="#222"/></svg>
<div class="t rl" style="left:1344.0px;top:77px">更新标记</div>
<svg style="left:1360.5px;top:92px" width="7" height="4"><path d="M0,0 L7,0 L3.5,4 Z" fill="#222"/></svg>
<div class="t gl" style="left:98.0px;top:108px">二维图形</div>
<div class="t gl" style="left:283.5px;top:108px">图案图块</div>
<div class="t gl" style="left:496.0px;top:108px">标注</div>
<div class="t gl" style="left:725.0px;top:108px">索引</div>
<div class="t gl" style="left:900.0px;top:108px">文字表格</div>
<div class="t gl" style="left:1138.0px;top:108px">符号</div>
<div class="t gl" style="left:1324.0px;top:108px">族标记</div>
<div class="a" style="left:234px;top:50px;width:1px;height:68px;background:#dcdcdc"></div>
<div class="a" style="left:373px;top:50px;width:1px;height:68px;background:#dcdcdc"></div>
<div class="a" style="left:639px;top:50px;width:1px;height:68px;background:#dcdcdc"></div>
<div class="a" style="left:831px;top:50px;width:1px;height:68px;background:#dcdcdc"></div>
<div class="a" style="left:1011px;top:50px;width:1px;height:68px;background:#dcdcdc"></div>
<div class="a" style="left:1286px;top:50px;width:1px;height:68px;background:#dcdcdc"></div>
<div class="a" style="left:1392px;top:50px;width:1px;height:68px;background:#dcdcdc"></div>

<!-- left properties panel -->
<!-- LP START -->
<div class="a" style="left:1px;top:123px;width:167px;height:656px;background:#fff;border:1px solid #cfcfcf;border-radius:2px"></div>
<div class="t" style="left:4px;top:127px;font-size:10px;color:#222">属性</div>
<svg style="left:123px;top:131px" width="7" height="4"><path d="M0,0 L7,0 L3.5,4 Z" fill="#111"/></svg>
<svg style="left:138px;top:129px" width="8" height="11"><path d="M2.5,1 L5.5,1 L5.5,6.5 L6.8,7.5 L6.8,8.3 L1.2,8.3 L1.2,7.5 L2.5,6.5 Z" fill="#999" stroke="#111" stroke-width="1"/><path d="M4,8.3 L4,11" stroke="#111"/></svg>
<svg style="left:153px;top:129.5px" width="9" height="8"><path d="M0.5,0.5 L8,7.5 M8,0.5 L0.5,7.5" stroke="#111" stroke-width="1.3"/></svg>
<div class="t" style="left:13px;top:146px;font-size:10px;color:#222">平面视图</div>
<div class="t" style="left:13px;top:160px;font-size:10px;color:#222">1-6轴立面图</div>
<div class="a" style="left:4px;top:190px;width:162px;height:586px;background:#fff;border:1px solid #95a3bf;border-bottom:4px solid #a9b8d4"></div>
<div class="a" style="left:5px;top:191px;width:8px;height:402px;background:#f0f0f0"></div>
<div class="a" style="left:5px;top:191px;width:160px;height:13px;background:#f0f0f0"></div>
<svg style="left:10px;top:195.5px" width="5" height="5"><path d="M0,5 L5,5 L5,0 Z" fill="#3a3f8f"/></svg>
<div class="t" style="left:22px;top:192.0px;font-size:10px;font-weight:bold;color:#222">视图信息</div>
<div class="a" style="left:13px;top:222px;width:152px;height:1px;background:#f0f0f0"></div>
<div class="a" style="left:87px;top:204px;width:1px;height:19px;background:#f0f0f0"></div>
<div class="t" style="left:15px;top:208.0px;font-size:10px;color:#333">楼层顶标高(m)</div>
<div class="t" style="left:93px;top:208.0px;font-size:10px;color:#9a9a9a">2.950</div>
<div class="a" style="left:13px;top:242px;width:152px;height:1px;background:#f0f0f0"></div>
<div class="a" style="left:87px;top:223px;width:1px;height:20px;background:#f0f0f0"></div>
<div class="t" style="left:15px;top:227.5px;font-size:10px;color:#333">楼层底标高(m)</div>
<div class="t" style="left:93px;top:227.5px;font-size:10px;color:#9a9a9a">-0.050</div>
<div class="a" style="left:13px;top:261px;width:152px;height:1px;background:#f0f0f0"></div>
<div class="a" style="left:87px;top:243px;width:1px;height:19px;background:#f0f0f0"></div>
<div class="t" style="left:15px;top:247.0px;font-size:10px;color:#333">楼层层高(m)</div>
<div class="t" style="left:93px;top:247.0px;font-size:10px;color:#9a9a9a">3.0</div>
<div class="a" style="left:13px;top:281px;width:152px;height:1px;background:#f0f0f0"></div>
<div class="a" style="left:87px;top:262px;width:1px;height:20px;background:#f0f0f0"></div>
<div class="t" style="left:15px;top:266.5px;font-size:10px;color:#333">出图比例</div>
<div class="t" style="left:93px;top:266.5px;font-size:10px;color:#9a9a9a">100</div>
<div class="a" style="left:13px;top:301px;width:152px;height:1px;background:#f0f0f0"></div>
<div class="a" style="left:87px;top:282px;width:1px;height:20px;background:#f0f0f0"></div>
<div class="t" style="left:15px;top:286.5px;font-size:10px;color:#333">绘图比例</div>
<div class="t" style="left:93px;top:286.5px;font-size:10px;color:#9a9a9a">100</div>
<div class="a" style="left:13px;top:317px;width:152px;height:1px;background:#f0f0f0"></div>
<div class="a" style="left:87px;top:302px;width:1px;height:16px;background:#f0f0f0"></div>
<div class="t" style="left:15px;top:304.5px;font-size:10px;color:#333">楼板选中开/关</div>
<div class="a" style="left:93px;top:303.5px;width:15px;height:13px;border:1px solid #666;border-radius:3px;background:#fff"></div>
<div class="a" style="left:13px;top:334px;width:152px;height:1px;background:#f0f0f0"></div>
<div class="a" style="left:87px;top:318px;width:1px;height:17px;background:#f0f0f0"></div>
<div class="t" style="left:15px;top:321.0px;font-size:10px;color:#333">显示定位基准点</div>
<svg style="left:93px;top:320.0px" width="15" height="13"><rect x="0" y="0" width="15" height="13" rx="3" fill="#3b7de0"/><path d="M3.8,6.5 L6.5,9.2 L11.2,3.8" fill="none" stroke="#fff" stroke-width="1.6"/></svg>
<div class="a" style="left:13px;top:350px;width:152px;height:1px;background:#f0f0f0"></div>
<div class="a" style="left:87px;top:335px;width:1px;height:16px;background:#f0f0f0"></div>
<div class="t" style="left:15px;top:337.5px;font-size:10px;color:#333">视口旋转[0,3...</div>
<div class="t" style="left:91px;top:337.5px;font-size:10px;color:#222">0</div>
<div class="a" style="left:13px;top:366px;width:152px;height:1px;background:#f0f0f0"></div>
<div class="a" style="left:87px;top:351px;width:1px;height:16px;background:#f0f0f0"></div>
<div class="t" style="left:15px;top:353.5px;font-size:10px;color:#333">视图类型</div>
<div class="t" style="left:93px;top:353.5px;font-size:10px;color:#9a9a9a">绘图视图</div>
<div class="a" style="left:13px;top:382px;width:152px;height:1px;background:#f0f0f0"></div>
<div class="a" style="left:87px;top:367px;width:1px;height:16px;background:#f0f0f0"></div>
<div class="t" style="left:15px;top:369.5px;font-size:10px;color:#333">视图样板</div>
<div class="a" style="left:88px;top:367px;width:60px;height:16px;background:#efefef;border:1px solid #bcbcbc"></div>
<div class="t" style="left:92px;top:370.5px;font-size:10px;color:#222">(无)</div>
<svg style="left:136px;top:373px" width="6" height="4"><path d="M0.5,0.5 L3,3 L5.5,0.5" fill="none" stroke="#555"/></svg>
<div class="a" style="left:147px;top:367px;width:18px;height:16px;background:#e6e6e6;border:1px solid #777"></div>
<div class="t" style="left:151px;top:368.5px;font-size:10px;color:#222">...</div>
<div class="a" style="left:5px;top:383px;width:160px;height:16px;background:#f0f0f0"></div>
<svg style="left:10px;top:389.0px" width="5" height="5"><path d="M0,5 L5,5 L5,0 Z" fill="#3a3f8f"/></svg>
<div class="t" style="left:22px;top:385.5px;font-size:10px;font-weight:bold;color:#222">通用信息</div>
<div class="a" style="left:13px;top:416px;width:152px;height:1px;background:#f0f0f0"></div>
<div class="a" style="left:87px;top:399px;width:1px;height:18px;background:#f0f0f0"></div>
<div class="t" style="left:15px;top:402.5px;font-size:10px;color:#333">UniqueId</div>
<div class="t" style="left:93px;top:402.5px;font-size:10px;color:#9a9a9a">5c2de601-305</div>
<div class="a" style="left:13px;top:433px;width:152px;height:1px;background:#f0f0f0"></div>
<div class="a" style="left:87px;top:417px;width:1px;height:17px;background:#f0f0f0"></div>
<div class="t" style="left:15px;top:420.0px;font-size:10px;color:#333">图纸类型</div>
<div class="t" style="left:93px;top:420.0px;font-size:10px;color:#9a9a9a">通用视图</div>
<div class="a" style="left:13px;top:451px;width:152px;height:1px;background:#f0f0f0"></div>
<div class="a" style="left:87px;top:434px;width:1px;height:18px;background:#f0f0f0"></div>
<div class="t" style="left:15px;top:437.5px;font-size:10px;color:#333">视图名称</div>
<div class="t" style="left:93px;top:437.5px;font-size:10px;color:#9a9a9a">1-6轴立面图</div>
<div class="a" style="left:5px;top:452px;width:160px;height:15px;background:#f0f0f0"></div>
<svg style="left:10px;top:457.5px" width="5" height="5"><path d="M0,5 L5,5 L5,0 Z" fill="#3a3f8f"/></svg>
<div class="t" style="left:22px;top:454.0px;font-size:10px;font-weight:bold;color:#222">剖切参数</div>
<div class="a" style="left:13px;top:482px;width:152px;height:1px;background:#f0f0f0"></div>
<div class="a" style="left:87px;top:467px;width:1px;height:16px;background:#f0f0f0"></div>
<div class="t" style="left:15px;top:469.5px;font-size:10px;color:#333">启用剖切标高</div>
<div class="a" style="left:93px;top:468.5px;width:15px;height:13px;border:1px solid #666;border-radius:3px;background:#fff"></div>
<div class="a" style="left:13px;top:498px;width:152px;height:1px;background:#f0f0f0"></div>
<div class="a" style="left:87px;top:483px;width:1px;height:16px;background:#f0f0f0"></div>
<div class="t" style="left:15px;top:485.5px;font-size:10px;color:#333">顶部剖切标高...</div>
<div class="t" style="left:91px;top:485.5px;font-size:10px;color:#222">0</div>
<div class="a" style="left:13px;top:514px;width:152px;height:1px;background:#f0f0f0"></div>
<div class="a" style="left:87px;top:499px;width:1px;height:16px;background:#f0f0f0"></div>
<div class="t" style="left:15px;top:501.5px;font-size:10px;color:#333">底部剖切标高...</div>
<div class="t" style="left:91px;top:501.5px;font-size:10px;color:#222">0</div>
<div class="a" style="left:5px;top:515px;width:160px;height:16px;background:#f0f0f0"></div>
<svg style="left:10px;top:521.0px" width="5" height="5"><path d="M0,5 L5,5 L5,0 Z" fill="#3a3f8f"/></svg>
<div class="t" style="left:22px;top:517.5px;font-size:10px;font-weight:bold;color:#222">视图功能</div>
<div class="a" style="left:13px;top:546px;width:152px;height:1px;background:#f0f0f0"></div>
<div class="a" style="left:87px;top:531px;width:1px;height:16px;background:#f0f0f0"></div>
<div class="t" style="left:15px;top:533.5px;font-size:10px;color:#333">本层三维</div>
<div class="a" style="left:88px;top:531px;width:77px;height:16px;background:#e1e1e1;border:1px solid #707070"></div>
<div class="t" style="left:106px;top:533.5px;font-size:10px;color:#222">本层三维</div>
<div class="a" style="left:13px;top:562px;width:152px;height:1px;background:#f0f0f0"></div>
<div class="a" style="left:87px;top:547px;width:1px;height:16px;background:#f0f0f0"></div>
<div class="t" style="left:15px;top:549.5px;font-size:10px;color:#333">自动刷新剖面</div>
<svg style="left:93px;top:548.5px" width="15" height="13"><rect x="0" y="0" width="15" height="13" rx="3" fill="#3b7de0"/><path d="M3.8,6.5 L6.5,9.2 L11.2,3.8" fill="none" stroke="#fff" stroke-width="1.6"/></svg>
<div class="a" style="left:5px;top:563px;width:160px;height:15px;background:#f0f0f0"></div>
<svg style="left:10px;top:568.5px" width="5" height="5"><path d="M0,5 L5,5 L5,0 Z" fill="#3a3f8f"/></svg>
<div class="t" style="left:22px;top:565.0px;font-size:10px;font-weight:bold;color:#222">杂项</div>
<div class="a" style="left:13px;top:592px;width:152px;height:1px;background:#f0f0f0"></div>
<div class="a" style="left:87px;top:578px;width:1px;height:15px;background:#f0f0f0"></div>
<div class="t" style="left:15px;top:580.0px;font-size:10px;color:#333">IfExternalPro...</div>
<div class="a" style="left:93px;top:579.0px;width:15px;height:13px;border:1px solid #c8c8c8;border-radius:3px;background:#e8e8e8"></div>

<!-- LP END -->

<!-- center document frame -->
<!-- CENTER START -->
<div class="a" style="left:172px;top:124px;width:1254px;height:656px;background:#fff"></div>
<div class="a" style="left:173px;top:125px;width:86px;height:17px;background:#fff;border:1px solid #d4d4d4"></div>
<div class="t" style="left:175.5px;top:127px;font-size:10px;color:#222">三维视图(全楼)</div>
<div class="a" style="left:259px;top:125px;width:127px;height:17px;background:#fff;border:1px solid #d4d4d4"></div>
<div class="t" style="left:261.5px;top:127px;font-size:10px;color:#222">0.000(m)平面_防火分区</div>
<div class="a" style="left:386px;top:125px;width:70px;height:17px;background:#fff;border:1px solid #d4d4d4"></div>
<div class="t" style="left:388.5px;top:127px;font-size:10px;color:#222">一层平面图</div>
<div class="a" style="left:456px;top:125px;width:71px;height:17px;background:#fff;border:1px solid #d4d4d4"></div>
<div class="t" style="left:458.5px;top:127px;font-size:10px;color:#222">二层平面图</div>
<div class="a" style="left:527px;top:125px;width:71px;height:17px;background:#fff;border:1px solid #d4d4d4"></div>
<div class="t" style="left:529.5px;top:127px;font-size:10px;color:#222">三层平面图</div>
<div class="a" style="left:598px;top:125px;width:70px;height:17px;background:#fff;border:1px solid #d4d4d4"></div>
<div class="t" style="left:600.5px;top:127px;font-size:10px;color:#222">四层平面图</div>
<div class="a" style="left:668px;top:125px;width:71px;height:17px;background:#fff;border:1px solid #d4d4d4"></div>
<div class="t" style="left:670.5px;top:127px;font-size:10px;color:#222">五层平面图</div>
<div class="a" style="left:739px;top:125px;width:81px;height:17px;background:#fff;border:1px solid #d4d4d4"></div>
<div class="t" style="left:741.5px;top:127px;font-size:10px;color:#222">屋顶层平面图</div>
<div class="a" style="left:820px;top:124px;width:76px;height:18px;background:#87a6ee;border:1px solid #87a6ee"></div>
<div class="t" style="left:822.5px;top:127px;font-size:10px;color:#222">1-6轴立面图</div>
<div class="a" style="left:896px;top:125px;width:56px;height:17px;background:#fff;border:1px solid #d4d4d4"></div>
<div class="t" style="left:898.5px;top:127px;font-size:10px;color:#222">1-1剖面</div>
<svg style="left:881px;top:128px" width="8" height="7"><path d="M0.5,0.5 L7.5,6.5 M7.5,0.5 L0.5,6.5" stroke="#222" stroke-width="1.3"/></svg>
<svg style="left:1411px;top:128.5px" width="7" height="8"><rect x="0" y="0.5" width="7" height="2" fill="#222"/><path d="M0,4 L7,4 L3.5,7.5 Z" fill="#222"/></svg>
<div class="a" style="left:172px;top:141px;width:250px;height:639px;border:1px solid #d4d4d4;border-right:none;background:transparent"></div>
<div class="a" style="left:172px;top:141px;width:1250px;height:639px;border:1px solid #d0d0d0;background:transparent"></div>
<div class="a" id="canvas" style="left:175px;top:144px;width:1244px;height:613px;background:#000;overflow:hidden"><!--CANVAS--><svg style="left:0;top:0" width="1244" height="613" viewBox="175 144 1244 613">
<defs>
<pattern id="pH" width="6" height="6" patternUnits="userSpaceOnUse" x="499" y="285">
 <path d="M0.8,4.6 L3.6,1.4 M1.3,2 L3.1,4" stroke="#808080" stroke-width="0.8"/>
</pattern>
<pattern id="pG" width="4" height="2" patternUnits="userSpaceOnUse" x="683" y="285">
 <rect width="4" height="2" fill="#3c3c3c"/><rect y="0" width="4" height="1" fill="#4e4e4e"/><rect x="1" y="0" width="1" height="1" fill="#5c5c5c"/><rect x="3" y="1" width="1" height="1" fill="#333"/>
</pattern>
<pattern id="pD" width="6.5" height="6" patternUnits="userSpaceOnUse" x="710.5" y="285">
 <rect width="6.5" height="6" fill="#000"/><circle cx="3.2" cy="3" r="1.3" fill="none" stroke="#6a6a6a" stroke-width="0.6"/>
</pattern>
<pattern id="pX" width="4" height="4" patternUnits="userSpaceOnUse">
 <rect width="4" height="4" fill="#2a2a2a"/><path d="M0,4 L4,0" stroke="#777" stroke-width="0.8"/>
</pattern>
<pattern id="pS" width="3" height="3" patternUnits="userSpaceOnUse">
 <rect width="3" height="3" fill="#0c0c0c"/><rect x="0" y="0" width="1" height="1" fill="#aaa"/><rect x="1.5" y="1.5" width="1" height="1" fill="#666"/>
</pattern>
</defs>
<rect x="402.5" y="184.5" width="714" height="491" fill="none" stroke="#a8a8a8" stroke-width="1.2"/>
<rect x="423.5" y="192.5" width="685" height="474" fill="none" stroke="#a8a8a8" stroke-width="1.1"/>
<path d="M1048.5,192.5 V666.5" stroke="#a8a8a8" stroke-width="1.1"/>
<path d="M1049,241.6 H1108.5" stroke="#a8a8a8" stroke-width="1.1"/>
<path d="M1049,480 H1108.5" stroke="#a8a8a8" stroke-width="1.1"/>
<path d="M1049,507.8 H1108.5" stroke="#a8a8a8" stroke-width="1.1"/>
<path d="M1049,537.6 H1108.5" stroke="#a8a8a8" stroke-width="1.1"/>
<path d="M1049,548.2 H1108.5" stroke="#a8a8a8" stroke-width="1.1"/>
<path d="M1049,557.5 H1108.5" stroke="#a8a8a8" stroke-width="1.1"/>
<path d="M1049,574.6 H1108.5" stroke="#a8a8a8" stroke-width="1.1"/>
<path d="M1049,581.7 H1108.5" stroke="#a8a8a8" stroke-width="1.1"/>
<path d="M1065,587.2 H1108.5" stroke="#9a9a9a" stroke-width="1"/>
<path d="M1065,593.9 H1108.5" stroke="#9a9a9a" stroke-width="1"/>
<path d="M1065,600.8 H1108.5" stroke="#9a9a9a" stroke-width="1"/>
<path d="M1065,607 H1108.5" stroke="#9a9a9a" stroke-width="1"/>
<path d="M1065,614.4 H1108.5" stroke="#9a9a9a" stroke-width="1"/>
<path d="M1065,620.4 H1108.5" stroke="#9a9a9a" stroke-width="1"/>
<path d="M1065,627.3 H1108.5" stroke="#9a9a9a" stroke-width="1"/>
<path d="M1065,633.7 H1108.5" stroke="#9a9a9a" stroke-width="1"/>
<path d="M1065,639.6 H1108.5" stroke="#9a9a9a" stroke-width="1"/>
<path d="M1065,646.7 H1108.5" stroke="#9a9a9a" stroke-width="1"/>
<path d="M1065,653.6 H1108.5" stroke="#9a9a9a" stroke-width="1"/>
<path d="M1065,660.2 H1108.5" stroke="#9a9a9a" stroke-width="1"/>
<path d="M1049,600.8 H1065" stroke="#9a9a9a" stroke-width="1"/>
<path d="M1049,620.4 H1065" stroke="#9a9a9a" stroke-width="1"/>
<path d="M1049,627.3 H1065" stroke="#9a9a9a" stroke-width="1"/>
<path d="M1049,633.7 H1065" stroke="#9a9a9a" stroke-width="1"/>
<path d="M1049,639.6 H1065" stroke="#9a9a9a" stroke-width="1"/>
<path d="M1049,646.7 H1065" stroke="#9a9a9a" stroke-width="1"/>
<path d="M1049,653.6 H1065" stroke="#9a9a9a" stroke-width="1"/>
<path d="M1049,660.2 H1065" stroke="#9a9a9a" stroke-width="1"/>
<path d="M1065,537.6 V557.5 M1065,581.7 V666.5 M1086.7,581.7 V647 M1078.5,653.6 V666.5 M1091,653.6 V666.5" stroke="#9a9a9a" stroke-width="1"/>
<rect x="1068.5" y="199" width="20.5" height="20.5" fill="#ff1010" stroke="#d020d0" stroke-width="0.8"/>
<path d="M1074,203.5 H1083 M1073,211 H1077 M1079,211 H1084 M1072,215 H1085" stroke="#600" stroke-width="1"/>
<path d="M1050,226.5 H1108" stroke="#ff2020" stroke-width="3.2" stroke-dasharray="3.5 0.8"/><path d="M1050,231.5 H1108" stroke="#ff2020" stroke-width="1.6" stroke-dasharray="2 0.6"/>
<path d="M1051,511 H1058 M1061,511 H1064" stroke="#ff2020" stroke-width="1.6"/>
<path d="M1060,522 H1098" stroke="#ddd" stroke-width="2" stroke-dasharray="2.5 0.8"/>
<rect x="1050.5" y="539" width="13" height="7.5" fill="#c00"/><rect x="1050.5" y="550" width="13" height="6" fill="#c00"/>
<path d="M1066,541 H1107 M1066,545 H1107" stroke="#ccc" stroke-width="1.3" stroke-dasharray="3 1"/>
<path d="M1078,553 H1096" stroke="#ddd" stroke-width="1.8" stroke-dasharray="2 0.8"/>
<path d="M1051,560.5 H1053 M1055,560.5 H1065" stroke="#ff2020" stroke-width="1.5"/>
<path d="M1071,568 H1087" stroke="#eee" stroke-width="2" stroke-dasharray="2 0.6"/>
<path d="M1060,577.5 H1065 M1068,577.5 H1070 M1076,577.5 H1078 M1087,577.5 H1099 M1102,577.5 H1106" stroke="#ff2020" stroke-width="1.6"/>
<path d="M1052,587 H1064 M1052,590 H1064 M1052,608 H1064 M1052,611 H1064" stroke="#ff2020" stroke-width="1.4"/>
<path d="M1056,622 V666 M1059,622 V666" stroke="#ff2020" stroke-width="2" stroke-dasharray="3 1.5"/>
<path d="M1075,624 H1079 M1075,630 H1079 M1069,656.5 H1072 M1068,663 H1070 M1095,656.5 H1104 M1095,663 H1104 M1082,656 V664" stroke="#ff2020" stroke-width="1.3"/>
<rect x="499.5" y="285" width="183" height="184" fill="url(#pH)"/>
<rect x="683" y="285" width="215" height="221" fill="url(#pG)"/>
<rect x="499.5" y="469" width="183" height="36" fill="url(#pH)"/>
<rect x="502" y="469.5" width="22" height="26" fill="#000"/>
<path d="M502,469.5 V496 M507.7,469.5 V496" stroke="#ccc" stroke-width="0.9"/>
<rect x="497" y="505.5" width="401" height="8.5" fill="url(#pS)"/>
<path d="M493,506.3 H898 M493,514 H898" stroke="#e8e8e8" stroke-width="1.2"/><path d="M497,508.5 H898" stroke="#999" stroke-width="0.8" stroke-dasharray="1.5 1.5"/>
<rect x="497" y="514.5" width="409" height="58" fill="url(#pH)"/>
<rect x="507" y="516" width="17" height="34" fill="#8c8c8c"/>
<rect x="685.5" y="527.5" width="221" height="45" fill="none" stroke="#e0e0e0" stroke-width="1.4"/>
<path d="M686,533.5 H906" stroke="#ddd" stroke-width="1.2"/>
<rect x="687" y="529" width="218" height="4" fill="url(#pS)"/>
<rect x="687" y="534" width="11" height="38" fill="url(#pS)"/><rect x="895" y="534" width="11" height="38" fill="url(#pS)"/>
<path d="M499.5,285 V469" stroke="#55bf8a" stroke-width="1"/>
<path d="M516.5,285 V469" stroke="#55bf8a" stroke-width="1"/>
<path d="M533.5,285 V469" stroke="#55bf8a" stroke-width="1"/>
<path d="M550.5,285 V469" stroke="#55bf8a" stroke-width="1"/>
<path d="M567.5,285 V469" stroke="#55bf8a" stroke-width="1"/>
<path d="M584.5,285 V469" stroke="#55bf8a" stroke-width="1"/>
<path d="M601.5,285 V469" stroke="#55bf8a" stroke-width="1"/>
<path d="M618.5,285 V469" stroke="#55bf8a" stroke-width="1"/>
<path d="M636.5,285 V469" stroke="#55bf8a" stroke-width="1"/>
<path d="M652.5,285 V469" stroke="#55bf8a" stroke-width="1"/>
<path d="M665.5,285 V469" stroke="#55bf8a" stroke-width="1"/>
<path d="M499.5,285.5 H682" stroke="#55bf8a" stroke-width="1"/>
<path d="M499.5,290.5 H682" stroke="#55bf8a" stroke-width="1"/>
<path d="M499.5,307.5 H682" stroke="#55bf8a" stroke-width="1"/>
<path d="M499.5,327.5 H682" stroke="#55bf8a" stroke-width="1"/>
<path d="M499.5,335.5 H682" stroke="#55bf8a" stroke-width="1"/>
<path d="M499.5,351.5 H682" stroke="#55bf8a" stroke-width="1"/>
<path d="M499.5,371.5 H682" stroke="#55bf8a" stroke-width="1"/>
<path d="M499.5,380.5 H682" stroke="#55bf8a" stroke-width="1"/>
<path d="M499.5,396.5 H682" stroke="#55bf8a" stroke-width="1"/>
<path d="M499.5,416.5 H682" stroke="#55bf8a" stroke-width="1"/>
<path d="M499.5,424.5 H682" stroke="#55bf8a" stroke-width="1"/>
<path d="M499.5,441.5 H682" stroke="#55bf8a" stroke-width="1"/>
<path d="M499.5,461.5 H682" stroke="#55bf8a" stroke-width="1"/>
<path d="M499.5,469.5 H682" stroke="#55bf8a" stroke-width="1"/>
<path d="M523.7,469 V496" stroke="#55bf8a" stroke-width="1"/>
<path d="M536.4,469 V496" stroke="#55bf8a" stroke-width="1"/>
<path d="M549,469 V496" stroke="#55bf8a" stroke-width="1"/>
<path d="M561.7,469 V496" stroke="#55bf8a" stroke-width="1"/>
<path d="M574.3,469 V496" stroke="#55bf8a" stroke-width="1"/>
<path d="M579.4,469 V496" stroke="#55bf8a" stroke-width="1"/>
<path d="M600,469 V496" stroke="#55bf8a" stroke-width="1"/>
<path d="M612.6,469 V496" stroke="#55bf8a" stroke-width="1"/>
<path d="M625.3,469 V496" stroke="#55bf8a" stroke-width="1"/>
<path d="M638,469 V496" stroke="#55bf8a" stroke-width="1"/>
<path d="M650.6,469 V496" stroke="#55bf8a" stroke-width="1"/>
<path d="M663.3,469 V496" stroke="#55bf8a" stroke-width="1"/>
<path d="M676,469 V496" stroke="#55bf8a" stroke-width="1"/>
<path d="M682,469 V496" stroke="#55bf8a" stroke-width="1"/>
<path d="M524,486 H682" stroke="#55bf8a" stroke-width="1"/>
<path d="M580.5,469 V496 M586,469 V496" stroke="#ccc" stroke-width="0.8"/><rect x="581" y="469.5" width="4.5" height="26" fill="#000"/>
<path d="M548,496 L552,486 L556,496 M556,496 L560,486 L564,496 M604,496 L608,486 L612,496" stroke="#7de8b6" stroke-width="0.8" fill="none"/>
<rect x="501.8" y="495.5" width="180.5" height="9" fill="none" stroke="#c8e07a" stroke-width="1.4"/>
<path d="M511.9,495.5 V504.5" stroke="#c8e07a" stroke-width="1.3"/>
<path d="M522.0,495.5 V504.5" stroke="#c8e07a" stroke-width="1.3"/>
<path d="M532.1,495.5 V504.5" stroke="#c8e07a" stroke-width="1.3"/>
<path d="M542.2,495.5 V504.5" stroke="#c8e07a" stroke-width="1.3"/>
<path d="M552.3,495.5 V504.5" stroke="#c8e07a" stroke-width="1.3"/>
<path d="M562.4,495.5 V504.5" stroke="#c8e07a" stroke-width="1.3"/>
<path d="M572.5,495.5 V504.5" stroke="#c8e07a" stroke-width="1.3"/>
<path d="M582.6,495.5 V504.5" stroke="#c8e07a" stroke-width="1.3"/>
<path d="M592.7,495.5 V504.5" stroke="#c8e07a" stroke-width="1.3"/>
<path d="M602.8,495.5 V504.5" stroke="#c8e07a" stroke-width="1.3"/>
<path d="M612.9,495.5 V504.5" stroke="#c8e07a" stroke-width="1.3"/>
<path d="M623.0,495.5 V504.5" stroke="#c8e07a" stroke-width="1.3"/>
<path d="M633.1,495.5 V504.5" stroke="#c8e07a" stroke-width="1.3"/>
<path d="M643.2,495.5 V504.5" stroke="#c8e07a" stroke-width="1.3"/>
<path d="M653.3,495.5 V504.5" stroke="#c8e07a" stroke-width="1.3"/>
<path d="M663.4,495.5 V504.5" stroke="#c8e07a" stroke-width="1.3"/>
<path d="M673.5,495.5 V504.5" stroke="#c8e07a" stroke-width="1.3"/>
<path d="M683,285.5 H898" stroke="#d8d8d8" stroke-width="1"/>
<path d="M683,327.5 H898" stroke="#d8d8d8" stroke-width="1"/>
<path d="M683,371.5 H898" stroke="#d8d8d8" stroke-width="1"/>
<path d="M683,416.5 H898" stroke="#d8d8d8" stroke-width="1"/>
<path d="M683,461.5 H898" stroke="#d8d8d8" stroke-width="1"/>
<path d="M683,505.5 H898" stroke="#d8d8d8" stroke-width="1"/>
<path d="M897.5,285 V506 M683.5,285 V506" stroke="#cfcfcf" stroke-width="1"/>
<rect x="710.5" y="285" width="13.0" height="42" fill="#000"/>
<g fill="none" stroke="#b0b0b0" stroke-width="0.75"><circle cx="714.0" cy="287.2" r="1.35"/><circle cx="720.0" cy="287.2" r="1.35"/><circle cx="717.0" cy="290.8" r="1.35"/><circle cx="714.0" cy="294.4" r="1.35"/><circle cx="720.0" cy="294.4" r="1.35"/><circle cx="717.0" cy="298.0" r="1.35"/><circle cx="714.0" cy="301.6" r="1.35"/><circle cx="720.0" cy="301.6" r="1.35"/><circle cx="717.0" cy="305.2" r="1.35"/><circle cx="714.0" cy="308.8" r="1.35"/><circle cx="720.0" cy="308.8" r="1.35"/><circle cx="717.0" cy="312.4" r="1.35"/><circle cx="714.0" cy="316.0" r="1.35"/><circle cx="720.0" cy="316.0" r="1.35"/><circle cx="717.0" cy="319.6" r="1.35"/><circle cx="714.0" cy="323.2" r="1.35"/><circle cx="720.0" cy="323.2" r="1.35"/></g>
<rect x="710.5" y="327" width="13.0" height="8.5" fill="#000"/>
<g fill="none" stroke="#b0b0b0" stroke-width="0.75"><circle cx="714.0" cy="329.2" r="1.35"/><circle cx="720.0" cy="329.2" r="1.35"/><circle cx="717.0" cy="332.8" r="1.35"/></g>
<rect x="710.5" y="335.5" width="13.0" height="36" fill="url(#pX)"/>
<rect x="711.0" y="351" width="12.0" height="10.5" fill="none" stroke="#6f9ff0" stroke-width="1.3"/>
<rect x="710.5" y="371.5" width="13.0" height="8.5" fill="#000"/>
<g fill="none" stroke="#b0b0b0" stroke-width="0.75"><circle cx="714.0" cy="373.7" r="1.35"/><circle cx="720.0" cy="373.7" r="1.35"/><circle cx="717.0" cy="377.3" r="1.35"/></g>
<rect x="710.5" y="380.0" width="13.0" height="36" fill="url(#pX)"/>
<rect x="711.0" y="395.5" width="12.0" height="10.5" fill="none" stroke="#6f9ff0" stroke-width="1.3"/>
<rect x="710.5" y="416" width="13.0" height="8.5" fill="#000"/>
<g fill="none" stroke="#b0b0b0" stroke-width="0.75"><circle cx="714.0" cy="418.2" r="1.35"/><circle cx="720.0" cy="418.2" r="1.35"/><circle cx="717.0" cy="421.8" r="1.35"/></g>
<rect x="710.5" y="424.5" width="13.0" height="36" fill="url(#pX)"/>
<rect x="711.0" y="440" width="12.0" height="10.5" fill="none" stroke="#6f9ff0" stroke-width="1.3"/>
<rect x="711.0" y="424.5" width="12.0" height="36" fill="none" stroke="#6f9ff0" stroke-width="1.3"/>
<rect x="710.5" y="461" width="13.0" height="8.5" fill="#000"/>
<g fill="none" stroke="#b0b0b0" stroke-width="0.75"><circle cx="714.0" cy="463.2" r="1.35"/><circle cx="720.0" cy="463.2" r="1.35"/><circle cx="717.0" cy="466.8" r="1.35"/></g>
<rect x="710.5" y="469.5" width="13.0" height="36" fill="url(#pX)"/>
<rect x="711.0" y="485" width="12.0" height="10.5" fill="none" stroke="#6f9ff0" stroke-width="1.3"/>
<rect x="711.0" y="469.5" width="12.0" height="36" fill="none" stroke="#6f9ff0" stroke-width="1.3"/>
<path d="M710.5,285 V506 M723.5,285 V506" stroke="#bdbdbd" stroke-width="1"/>
<rect x="748.5" y="285" width="13.0" height="42" fill="#000"/>
<g fill="none" stroke="#b0b0b0" stroke-width="0.75"><circle cx="752.0" cy="287.2" r="1.35"/><circle cx="758.0" cy="287.2" r="1.35"/><circle cx="755.0" cy="290.8" r="1.35"/><circle cx="752.0" cy="294.4" r="1.35"/><circle cx="758.0" cy="294.4" r="1.35"/><circle cx="755.0" cy="298.0" r="1.35"/><circle cx="752.0" cy="301.6" r="1.35"/><circle cx="758.0" cy="301.6" r="1.35"/><circle cx="755.0" cy="305.2" r="1.35"/><circle cx="752.0" cy="308.8" r="1.35"/><circle cx="758.0" cy="308.8" r="1.35"/><circle cx="755.0" cy="312.4" r="1.35"/><circle cx="752.0" cy="316.0" r="1.35"/><circle cx="758.0" cy="316.0" r="1.35"/><circle cx="755.0" cy="319.6" r="1.35"/><circle cx="752.0" cy="323.2" r="1.35"/><circle cx="758.0" cy="323.2" r="1.35"/></g>
<rect x="748.5" y="327" width="13.0" height="8.5" fill="#000"/>
<g fill="none" stroke="#b0b0b0" stroke-width="0.75"><circle cx="752.0" cy="329.2" r="1.35"/><circle cx="758.0" cy="329.2" r="1.35"/><circle cx="755.0" cy="332.8" r="1.35"/></g>
<rect x="748.5" y="335.5" width="13.0" height="36" fill="url(#pX)"/>
<rect x="749.0" y="351" width="12.0" height="10.5" fill="none" stroke="#6f9ff0" stroke-width="1.3"/>
<rect x="748.5" y="371.5" width="13.0" height="8.5" fill="#000"/>
<g fill="none" stroke="#b0b0b0" stroke-width="0.75"><circle cx="752.0" cy="373.7" r="1.35"/><circle cx="758.0" cy="373.7" r="1.35"/><circle cx="755.0" cy="377.3" r="1.35"/></g>
<rect x="748.5" y="380.0" width="13.0" height="36" fill="url(#pX)"/>
<rect x="749.0" y="395.5" width="12.0" height="10.5" fill="none" stroke="#6f9ff0" stroke-width="1.3"/>
<rect x="748.5" y="416" width="13.0" height="8.5" fill="#000"/>
<g fill="none" stroke="#b0b0b0" stroke-width="0.75"><circle cx="752.0" cy="418.2" r="1.35"/><circle cx="758.0" cy="418.2" r="1.35"/><circle cx="755.0" cy="421.8" r="1.35"/></g>
<rect x="748.5" y="424.5" width="13.0" height="36" fill="url(#pX)"/>
<rect x="749.0" y="440" width="12.0" height="10.5" fill="none" stroke="#6f9ff0" stroke-width="1.3"/>
<rect x="749.0" y="424.5" width="12.0" height="36" fill="none" stroke="#6f9ff0" stroke-width="1.3"/>
<rect x="748.5" y="461" width="13.0" height="8.5" fill="#000"/>
<g fill="none" stroke="#b0b0b0" stroke-width="0.75"><circle cx="752.0" cy="463.2" r="1.35"/><circle cx="758.0" cy="463.2" r="1.35"/><circle cx="755.0" cy="466.8" r="1.35"/></g>
<rect x="748.5" y="469.5" width="13.0" height="36" fill="url(#pX)"/>
<rect x="749.0" y="485" width="12.0" height="10.5" fill="none" stroke="#6f9ff0" stroke-width="1.3"/>
<rect x="749.0" y="469.5" width="12.0" height="36" fill="none" stroke="#6f9ff0" stroke-width="1.3"/>
<path d="M748.5,285 V506 M761.5,285 V506" stroke="#bdbdbd" stroke-width="1"/>
<rect x="786.5" y="285" width="13.0" height="42" fill="#000"/>
<g fill="none" stroke="#b0b0b0" stroke-width="0.75"><circle cx="790.0" cy="287.2" r="1.35"/><circle cx="796.0" cy="287.2" r="1.35"/><circle cx="793.0" cy="290.8" r="1.35"/><circle cx="790.0" cy="294.4" r="1.35"/><circle cx="796.0" cy="294.4" r="1.35"/><circle cx="793.0" cy="298.0" r="1.35"/><circle cx="790.0" cy="301.6" r="1.35"/><circle cx="796.0" cy="301.6" r="1.35"/><circle cx="793.0" cy="305.2" r="1.35"/><circle cx="790.0" cy="308.8" r="1.35"/><circle cx="796.0" cy="308.8" r="1.35"/><circle cx="793.0" cy="312.4" r="1.35"/><circle cx="790.0" cy="316.0" r="1.35"/><circle cx="796.0" cy="316.0" r="1.35"/><circle cx="793.0" cy="319.6" r="1.35"/><circle cx="790.0" cy="323.2" r="1.35"/><circle cx="796.0" cy="323.2" r="1.35"/></g>
<rect x="786.5" y="327" width="13.0" height="8.5" fill="#000"/>
<g fill="none" stroke="#b0b0b0" stroke-width="0.75"><circle cx="790.0" cy="329.2" r="1.35"/><circle cx="796.0" cy="329.2" r="1.35"/><circle cx="793.0" cy="332.8" r="1.35"/></g>
<rect x="786.5" y="335.5" width="13.0" height="36" fill="url(#pX)"/>
<rect x="787.0" y="351" width="12.0" height="10.5" fill="none" stroke="#6f9ff0" stroke-width="1.3"/>
<rect x="787.0" y="335.5" width="12.0" height="36" fill="none" stroke="#6f9ff0" stroke-width="1.3"/>
<rect x="786.5" y="371.5" width="13.0" height="8.5" fill="#000"/>
<g fill="none" stroke="#b0b0b0" stroke-width="0.75"><circle cx="790.0" cy="373.7" r="1.35"/><circle cx="796.0" cy="373.7" r="1.35"/><circle cx="793.0" cy="377.3" r="1.35"/></g>
<rect x="786.5" y="380.0" width="13.0" height="36" fill="url(#pX)"/>
<rect x="787.0" y="395.5" width="12.0" height="10.5" fill="none" stroke="#6f9ff0" stroke-width="1.3"/>
<rect x="787.0" y="380.0" width="12.0" height="36" fill="none" stroke="#6f9ff0" stroke-width="1.3"/>
<rect x="786.5" y="416" width="13.0" height="8.5" fill="#000"/>
<g fill="none" stroke="#b0b0b0" stroke-width="0.75"><circle cx="790.0" cy="418.2" r="1.35"/><circle cx="796.0" cy="418.2" r="1.35"/><circle cx="793.0" cy="421.8" r="1.35"/></g>
<rect x="786.5" y="424.5" width="13.0" height="36" fill="url(#pX)"/>
<rect x="787.0" y="440" width="12.0" height="10.5" fill="none" stroke="#6f9ff0" stroke-width="1.3"/>
<rect x="787.0" y="424.5" width="12.0" height="36" fill="none" stroke="#6f9ff0" stroke-width="1.3"/>
<rect x="786.5" y="461" width="13.0" height="8.5" fill="#000"/>
<g fill="none" stroke="#b0b0b0" stroke-width="0.75"><circle cx="790.0" cy="463.2" r="1.35"/><circle cx="796.0" cy="463.2" r="1.35"/><circle cx="793.0" cy="466.8" r="1.35"/></g>
<rect x="786.5" y="469.5" width="13.0" height="36" fill="url(#pX)"/>
<rect x="787.0" y="485" width="12.0" height="10.5" fill="none" stroke="#6f9ff0" stroke-width="1.3"/>
<rect x="787.0" y="469.5" width="12.0" height="36" fill="none" stroke="#6f9ff0" stroke-width="1.3"/>
<path d="M786.5,285 V506 M799.5,285 V506" stroke="#bdbdbd" stroke-width="1"/>
<rect x="824.5" y="285" width="14.0" height="42" fill="#000"/>
<g fill="none" stroke="#b0b0b0" stroke-width="0.75"><circle cx="828.3" cy="287.2" r="1.35"/><circle cx="834.7" cy="287.2" r="1.35"/><circle cx="831.5" cy="290.8" r="1.35"/><circle cx="828.3" cy="294.4" r="1.35"/><circle cx="834.7" cy="294.4" r="1.35"/><circle cx="831.5" cy="298.0" r="1.35"/><circle cx="828.3" cy="301.6" r="1.35"/><circle cx="834.7" cy="301.6" r="1.35"/><circle cx="831.5" cy="305.2" r="1.35"/><circle cx="828.3" cy="308.8" r="1.35"/><circle cx="834.7" cy="308.8" r="1.35"/><circle cx="831.5" cy="312.4" r="1.35"/><circle cx="828.3" cy="316.0" r="1.35"/><circle cx="834.7" cy="316.0" r="1.35"/><circle cx="831.5" cy="319.6" r="1.35"/><circle cx="828.3" cy="323.2" r="1.35"/><circle cx="834.7" cy="323.2" r="1.35"/></g>
<rect x="824.5" y="327" width="14.0" height="8.5" fill="#000"/>
<g fill="none" stroke="#b0b0b0" stroke-width="0.75"><circle cx="828.3" cy="329.2" r="1.35"/><circle cx="834.7" cy="329.2" r="1.35"/><circle cx="831.5" cy="332.8" r="1.35"/></g>
<rect x="824.5" y="335.5" width="14.0" height="36" fill="url(#pX)"/>
<rect x="825.0" y="351" width="13.0" height="10.5" fill="none" stroke="#6f9ff0" stroke-width="1.3"/>
<rect x="825.0" y="335.5" width="13.0" height="36" fill="none" stroke="#6f9ff0" stroke-width="1.3"/>
<rect x="824.5" y="371.5" width="14.0" height="8.5" fill="#000"/>
<g fill="none" stroke="#b0b0b0" stroke-width="0.75"><circle cx="828.3" cy="373.7" r="1.35"/><circle cx="834.7" cy="373.7" r="1.35"/><circle cx="831.5" cy="377.3" r="1.35"/></g>
<rect x="824.5" y="380.0" width="14.0" height="36" fill="url(#pX)"/>
<rect x="825.0" y="395.5" width="13.0" height="10.5" fill="none" stroke="#6f9ff0" stroke-width="1.3"/>
<rect x="825.0" y="380.0" width="13.0" height="36" fill="none" stroke="#6f9ff0" stroke-width="1.3"/>
<rect x="824.5" y="416" width="14.0" height="8.5" fill="#000"/>
<g fill="none" stroke="#b0b0b0" stroke-width="0.75"><circle cx="828.3" cy="418.2" r="1.35"/><circle cx="834.7" cy="418.2" r="1.35"/><circle cx="831.5" cy="421.8" r="1.35"/></g>
<rect x="824.5" y="424.5" width="14.0" height="36" fill="url(#pX)"/>
<rect x="825.0" y="440" width="13.0" height="10.5" fill="none" stroke="#6f9ff0" stroke-width="1.3"/>
<rect x="825.0" y="424.5" width="13.0" height="36" fill="none" stroke="#6f9ff0" stroke-width="1.3"/>
<rect x="824.5" y="461" width="14.0" height="8.5" fill="#000"/>
<g fill="none" stroke="#b0b0b0" stroke-width="0.75"><circle cx="828.3" cy="463.2" r="1.35"/><circle cx="834.7" cy="463.2" r="1.35"/><circle cx="831.5" cy="466.8" r="1.35"/></g>
<rect x="824.5" y="469.5" width="14.0" height="36" fill="url(#pX)"/>
<rect x="825.0" y="485" width="13.0" height="10.5" fill="none" stroke="#6f9ff0" stroke-width="1.3"/>
<rect x="825.0" y="469.5" width="13.0" height="36" fill="none" stroke="#6f9ff0" stroke-width="1.3"/>
<path d="M824.5,285 V506 M838.5,285 V506" stroke="#bdbdbd" stroke-width="1"/>
<path d="M497.6,514.5 V572" stroke="#7de8b6" stroke-width="2"/>
<path d="M506,514.5 V572" stroke="#7de8b6" stroke-width="2"/>
<path d="M525.4,514.5 V572" stroke="#7de8b6" stroke-width="2"/>
<path d="M544.3,514.5 V572" stroke="#7de8b6" stroke-width="2"/>
<path d="M563.4,514.5 V572" stroke="#7de8b6" stroke-width="2"/>
<path d="M582.4,514.5 V572" stroke="#7de8b6" stroke-width="2"/>
<path d="M601.3,514.5 V572" stroke="#7de8b6" stroke-width="2"/>
<path d="M620.2,514.5 V572" stroke="#7de8b6" stroke-width="2"/>
<path d="M639.1,514.5 V572" stroke="#7de8b6" stroke-width="2"/>
<path d="M658,514.5 V572" stroke="#7de8b6" stroke-width="2"/>
<path d="M676.9,514.5 V572" stroke="#7de8b6" stroke-width="2"/>
<path d="M684.5,514.5 V572" stroke="#5fcf96" stroke-width="1.1"/>
<path d="M696.8,514.5 V572" stroke="#5fcf96" stroke-width="1.1"/>
<path d="M710.5,514.5 V572" stroke="#5fcf96" stroke-width="1.1"/>
<path d="M722.8,514.5 V572" stroke="#5fcf96" stroke-width="1.1"/>
<path d="M735.8,514.5 V572" stroke="#5fcf96" stroke-width="1.1"/>
<path d="M748.8,514.5 V572" stroke="#5fcf96" stroke-width="1.1"/>
<path d="M761.1,514.5 V572" stroke="#5fcf96" stroke-width="1.1"/>
<path d="M774.1,514.5 V572" stroke="#5fcf96" stroke-width="1.1"/>
<path d="M786.4,514.5 V572" stroke="#5fcf96" stroke-width="1.1"/>
<path d="M798.7,514.5 V572" stroke="#5fcf96" stroke-width="1.1"/>
<path d="M811,514.5 V572" stroke="#5fcf96" stroke-width="1.1"/>
<path d="M823.3,514.5 V572" stroke="#5fcf96" stroke-width="1.1"/>
<path d="M835.6,514.5 V572" stroke="#5fcf96" stroke-width="1.1"/>
<path d="M848,514.5 V572" stroke="#5fcf96" stroke-width="1.1"/>
<path d="M860.3,514.5 V572" stroke="#5fcf96" stroke-width="1.1"/>
<path d="M872.6,514.5 V572" stroke="#5fcf96" stroke-width="1.1"/>
<path d="M884.9,514.5 V572" stroke="#5fcf96" stroke-width="1.1"/>
<path d="M897.2,514.5 V572" stroke="#5fcf96" stroke-width="1.1"/>
<path d="M497,529 H685 M497,552 H685 M497,561 H540 M560,561 H620 M640,561 H680 M686,551 H906" stroke="#5fcf96" stroke-width="1.1"/>
<path d="M525,561 L529,552 L533,561 L537,552 L541,561 M545,561 L549,552 L553,561 L557,552 L561,561 M602,561 L606,552 L610,561 L614,552 L618,561 M622,561 L626,552 L630,561" stroke="#7de8b6" stroke-width="1" fill="none"/>
<path d="M812,550 V572 M824,550 V572 M836,550 V572 M812,550 L824,572 M824,550 L812,572 M824,550 L836,572 M836,550 L824,572" stroke="#7de8b6" stroke-width="1"/>
<path d="M488,572.7 H909.5" stroke="#f0f0f0" stroke-width="2"/>
<path d="M506.5,276 V586" stroke="#c81414" stroke-width="1.2" stroke-dasharray="9 2.5 1.5 2.5"/>
<path d="M582.5,276 V586" stroke="#c81414" stroke-width="1.2" stroke-dasharray="9 2.5 1.5 2.5"/>
<path d="M658.7,276 V586" stroke="#c81414" stroke-width="1.2" stroke-dasharray="9 2.5 1.5 2.5"/>
<path d="M736,276 V586" stroke="#c81414" stroke-width="1.2" stroke-dasharray="9 2.5 1.5 2.5"/>
<path d="M812.3,276 V586" stroke="#c81414" stroke-width="1.2" stroke-dasharray="9 2.5 1.5 2.5"/>
<path d="M888.8,276 V586" stroke="#c81414" stroke-width="1.2" stroke-dasharray="9 2.5 1.5 2.5"/>
<path d="M506.5,586 H888.8" stroke="#1ec81e" stroke-width="1.3"/>
<circle cx="506.5" cy="592.5" r="3.6" fill="none" stroke="#1ec81e" stroke-width="1.1"/><path d="M506.5,576 V589" stroke="#1ec81e" stroke-width="0.8"/>
<circle cx="582.5" cy="592.5" r="3.6" fill="none" stroke="#1ec81e" stroke-width="1.1"/><path d="M582.5,576 V589" stroke="#1ec81e" stroke-width="0.8"/>
<circle cx="658.7" cy="592.5" r="3.6" fill="none" stroke="#1ec81e" stroke-width="1.1"/><path d="M658.7,576 V589" stroke="#1ec81e" stroke-width="0.8"/>
<circle cx="736" cy="592.5" r="3.6" fill="none" stroke="#1ec81e" stroke-width="1.1"/><path d="M736,576 V589" stroke="#1ec81e" stroke-width="0.8"/>
<circle cx="812.3" cy="592.5" r="3.6" fill="none" stroke="#1ec81e" stroke-width="1.1"/><path d="M812.3,576 V589" stroke="#1ec81e" stroke-width="0.8"/>
<circle cx="888.8" cy="592.5" r="3.6" fill="none" stroke="#1ec81e" stroke-width="1.1"/><path d="M888.8,576 V589" stroke="#1ec81e" stroke-width="0.8"/>
<path d="M536,583.5 H544" stroke="#ddd" stroke-width="1.6"/>
<path d="M616,583.5 H624" stroke="#ddd" stroke-width="1.6"/>
<path d="M693,583.5 H701" stroke="#ddd" stroke-width="1.6"/>
<path d="M767,583.5 H775" stroke="#ddd" stroke-width="1.6"/>
<path d="M846,583.5 H854" stroke="#ddd" stroke-width="1.6"/>
<path d="M683,578.5 H690 V572.5 M701,578.5 H708 M701,578.5 V572.5" stroke="#40d040" stroke-width="1"/><path d="M676,576.5 H688 M701,576.5 H711" stroke="#ddd" stroke-width="1.4"/>
<path d="M645.5,285 V572 M705.5,285 V572" stroke="#22c022" stroke-width="1"/>
<path d="M643.5,300 H648 M702.5,300 H707.5" stroke="#ddd" stroke-width="1.6"/>
<path d="M643.5,320 H648 M702.5,320 H707.5" stroke="#ddd" stroke-width="1.6"/>
<path d="M643.5,345 H648 M702.5,345 H707.5" stroke="#ddd" stroke-width="1.6"/>
<path d="M643.5,365 H648 M702.5,365 H707.5" stroke="#ddd" stroke-width="1.6"/>
<path d="M643.5,390 H648 M702.5,390 H707.5" stroke="#ddd" stroke-width="1.6"/>
<path d="M643.5,410 H648 M702.5,410 H707.5" stroke="#ddd" stroke-width="1.6"/>
<path d="M643.5,435 H648 M702.5,435 H707.5" stroke="#ddd" stroke-width="1.6"/>
<path d="M643.5,455 H648 M702.5,455 H707.5" stroke="#ddd" stroke-width="1.6"/>
<path d="M643.5,480 H648 M702.5,480 H707.5" stroke="#ddd" stroke-width="1.6"/>
<path d="M643.5,500 H648 M702.5,500 H707.5" stroke="#ddd" stroke-width="1.6"/>
<path d="M643.5,520 H648 M702.5,520 H707.5" stroke="#ddd" stroke-width="1.6"/>
<path d="M643.5,540 H648 M702.5,540 H707.5" stroke="#ddd" stroke-width="1.6"/>
<path d="M643.5,560 H648 M702.5,560 H707.5" stroke="#ddd" stroke-width="1.6"/>
<path d="M471.5,285 V572.5" stroke="#22d422" stroke-width="1"/>
<path d="M476.5,285 V572.5" stroke="#22d422" stroke-width="1"/>
<path d="M483.5,285 V572.5" stroke="#22d422" stroke-width="1"/>
<path d="M913.5,285 V572.5" stroke="#22d422" stroke-width="1"/>
<path d="M918.5,285 V572.5" stroke="#22d422" stroke-width="1"/>
<path d="M924.5,285 V572.5" stroke="#22d422" stroke-width="1"/>
<path d="M470,285 H490 M906,285 H926" stroke="#22d422" stroke-width="1.1"/>
<path d="M483,296 H490 M906,296 H913" stroke="#22d422" stroke-width="1"/>
<path d="M483,305 H490 M906,305 H913" stroke="#22d422" stroke-width="1"/>
<path d="M483,318 H490 M906,318 H913" stroke="#22d422" stroke-width="1"/>
<path d="M483,335 H490 M906,335 H913" stroke="#22d422" stroke-width="1"/>
<path d="M483,343 H490 M906,343 H913" stroke="#22d422" stroke-width="1"/>
<path d="M483,350 H490 M906,350 H913" stroke="#22d422" stroke-width="1"/>
<path d="M483,360 H490 M906,360 H913" stroke="#22d422" stroke-width="1"/>
<path d="M483,380 H490 M906,380 H913" stroke="#22d422" stroke-width="1"/>
<path d="M483,388 H490 M906,388 H913" stroke="#22d422" stroke-width="1"/>
<path d="M483,396 H490 M906,396 H913" stroke="#22d422" stroke-width="1"/>
<path d="M483,405 H490 M906,405 H913" stroke="#22d422" stroke-width="1"/>
<path d="M483,424 H490 M906,424 H913" stroke="#22d422" stroke-width="1"/>
<path d="M483,432 H490 M906,432 H913" stroke="#22d422" stroke-width="1"/>
<path d="M483,441 H490 M906,441 H913" stroke="#22d422" stroke-width="1"/>
<path d="M483,450 H490 M906,450 H913" stroke="#22d422" stroke-width="1"/>
<path d="M483,469 H490 M906,469 H913" stroke="#22d422" stroke-width="1"/>
<path d="M483,478 H490 M906,478 H913" stroke="#22d422" stroke-width="1"/>
<path d="M483,486 H490 M906,486 H913" stroke="#22d422" stroke-width="1"/>
<path d="M483,496 H490 M906,496 H913" stroke="#22d422" stroke-width="1"/>
<path d="M483,505 H490 M906,505 H913" stroke="#22d422" stroke-width="1"/>
<path d="M483,514 H490 M906,514 H913" stroke="#22d422" stroke-width="1"/>
<path d="M483,529 H490 M906,529 H913" stroke="#22d422" stroke-width="1"/>
<path d="M483,552 H490 M906,552 H913" stroke="#22d422" stroke-width="1"/>
<path d="M483,561 H490 M906,561 H913" stroke="#22d422" stroke-width="1"/>
<path d="M483.2,298 V303" stroke="#eee" stroke-width="2.2"/>
<path d="M913,300 V305" stroke="#eee" stroke-width="2.2"/>
<path d="M483.2,312 V317" stroke="#eee" stroke-width="2.2"/>
<path d="M913,314 V319" stroke="#eee" stroke-width="2.2"/>
<path d="M483.2,328 V333" stroke="#eee" stroke-width="2.2"/>
<path d="M913,330 V335" stroke="#eee" stroke-width="2.2"/>
<path d="M483.2,345 V350" stroke="#eee" stroke-width="2.2"/>
<path d="M913,347 V352" stroke="#eee" stroke-width="2.2"/>
<path d="M483.2,362 V367" stroke="#eee" stroke-width="2.2"/>
<path d="M913,364 V369" stroke="#eee" stroke-width="2.2"/>
<path d="M483.2,378 V383" stroke="#eee" stroke-width="2.2"/>
<path d="M913,380 V385" stroke="#eee" stroke-width="2.2"/>
<path d="M483.2,395 V400" stroke="#eee" stroke-width="2.2"/>
<path d="M913,397 V402" stroke="#eee" stroke-width="2.2"/>
<path d="M483.2,412 V417" stroke="#eee" stroke-width="2.2"/>
<path d="M913,414 V419" stroke="#eee" stroke-width="2.2"/>
<path d="M483.2,428 V433" stroke="#eee" stroke-width="2.2"/>
<path d="M913,430 V435" stroke="#eee" stroke-width="2.2"/>
<path d="M483.2,445 V450" stroke="#eee" stroke-width="2.2"/>
<path d="M913,447 V452" stroke="#eee" stroke-width="2.2"/>
<path d="M483.2,462 V467" stroke="#eee" stroke-width="2.2"/>
<path d="M913,464 V469" stroke="#eee" stroke-width="2.2"/>
<path d="M483.2,478 V483" stroke="#eee" stroke-width="2.2"/>
<path d="M913,480 V485" stroke="#eee" stroke-width="2.2"/>
<path d="M483.2,495 V500" stroke="#eee" stroke-width="2.2"/>
<path d="M913,497 V502" stroke="#eee" stroke-width="2.2"/>
<path d="M483.2,510 V515" stroke="#eee" stroke-width="2.2"/>
<path d="M913,512 V517" stroke="#eee" stroke-width="2.2"/>
<path d="M483.2,526 V531" stroke="#eee" stroke-width="2.2"/>
<path d="M913,528 V533" stroke="#eee" stroke-width="2.2"/>
<path d="M483.2,545 V550" stroke="#eee" stroke-width="2.2"/>
<path d="M913,547 V552" stroke="#eee" stroke-width="2.2"/>
<path d="M483.2,562 V567" stroke="#eee" stroke-width="2.2"/>
<path d="M913,564 V569" stroke="#eee" stroke-width="2.2"/>
<path d="M476.5,306 V311" stroke="#eee" stroke-width="2.2"/><path d="M918.4,310 V315" stroke="#eee" stroke-width="2.2"/>
<path d="M476.5,350 V355" stroke="#eee" stroke-width="2.2"/><path d="M918.4,354 V359" stroke="#eee" stroke-width="2.2"/>
<path d="M476.5,395 V400" stroke="#eee" stroke-width="2.2"/><path d="M918.4,399 V404" stroke="#eee" stroke-width="2.2"/>
<path d="M476.5,440 V445" stroke="#eee" stroke-width="2.2"/><path d="M918.4,444 V449" stroke="#eee" stroke-width="2.2"/>
<path d="M476.5,484 V489" stroke="#eee" stroke-width="2.2"/><path d="M918.4,488 V493" stroke="#eee" stroke-width="2.2"/>
<path d="M476.5,540 V545" stroke="#eee" stroke-width="2.2"/><path d="M918.4,544 V549" stroke="#eee" stroke-width="2.2"/>
<path d="M471.4,420 V427 M924,300 V306" stroke="#eee" stroke-width="2.2"/>
<path d="M453.5,280.5 H461" stroke="#e0e0e0" stroke-width="2.3" stroke-dasharray="2 0.6"/><path d="M460.5,281.8 L466,281.8 L463.2,284.7 Z" stroke="#bbb" stroke-width="0.8" fill="none"/>
<path d="M935.5,280.5 H943" stroke="#e0e0e0" stroke-width="2.3" stroke-dasharray="2 0.6"/><path d="M930,281.8 L935.5,281.8 L932.7,284.7 Z" stroke="#bbb" stroke-width="0.8" fill="none"/>
<path d="M463,327 H499" stroke="#cc2020" stroke-width="1.1" stroke-dasharray="8 3 2 3"/>
<path d="M898,327 H934" stroke="#cc2020" stroke-width="1.1" stroke-dasharray="8 3 2 3"/>
<path d="M453.5,322.5 H461" stroke="#e0e0e0" stroke-width="2.3" stroke-dasharray="2 0.6"/><path d="M460.5,323.8 L466,323.8 L463.2,326.7 Z" stroke="#bbb" stroke-width="0.8" fill="none"/>
<path d="M935.5,322.5 H943" stroke="#e0e0e0" stroke-width="2.3" stroke-dasharray="2 0.6"/><path d="M930,323.8 L935.5,323.8 L932.7,326.7 Z" stroke="#bbb" stroke-width="0.8" fill="none"/>
<path d="M463,371.5 H499" stroke="#cc2020" stroke-width="1.1" stroke-dasharray="8 3 2 3"/>
<path d="M898,371.5 H934" stroke="#cc2020" stroke-width="1.1" stroke-dasharray="8 3 2 3"/>
<path d="M453.5,367.0 H461" stroke="#e0e0e0" stroke-width="2.3" stroke-dasharray="2 0.6"/><path d="M460.5,368.3 L466,368.3 L463.2,371.2 Z" stroke="#bbb" stroke-width="0.8" fill="none"/>
<path d="M935.5,367.0 H943" stroke="#e0e0e0" stroke-width="2.3" stroke-dasharray="2 0.6"/><path d="M930,368.3 L935.5,368.3 L932.7,371.2 Z" stroke="#bbb" stroke-width="0.8" fill="none"/>
<path d="M463,416 H499" stroke="#cc2020" stroke-width="1.1" stroke-dasharray="8 3 2 3"/>
<path d="M898,416 H934" stroke="#cc2020" stroke-width="1.1" stroke-dasharray="8 3 2 3"/>
<path d="M453.5,411.5 H461" stroke="#e0e0e0" stroke-width="2.3" stroke-dasharray="2 0.6"/><path d="M460.5,412.8 L466,412.8 L463.2,415.7 Z" stroke="#bbb" stroke-width="0.8" fill="none"/>
<path d="M935.5,411.5 H943" stroke="#e0e0e0" stroke-width="2.3" stroke-dasharray="2 0.6"/><path d="M930,412.8 L935.5,412.8 L932.7,415.7 Z" stroke="#bbb" stroke-width="0.8" fill="none"/>
<path d="M463,461 H499" stroke="#cc2020" stroke-width="1.1" stroke-dasharray="8 3 2 3"/>
<path d="M898,461 H934" stroke="#cc2020" stroke-width="1.1" stroke-dasharray="8 3 2 3"/>
<path d="M453.5,456.5 H461" stroke="#e0e0e0" stroke-width="2.3" stroke-dasharray="2 0.6"/><path d="M460.5,457.8 L466,457.8 L463.2,460.7 Z" stroke="#bbb" stroke-width="0.8" fill="none"/>
<path d="M935.5,456.5 H943" stroke="#e0e0e0" stroke-width="2.3" stroke-dasharray="2 0.6"/><path d="M930,457.8 L935.5,457.8 L932.7,460.7 Z" stroke="#bbb" stroke-width="0.8" fill="none"/>
<path d="M463,505 H499" stroke="#cc2020" stroke-width="1.1" stroke-dasharray="8 3 2 3"/>
<path d="M898,505 H934" stroke="#cc2020" stroke-width="1.1" stroke-dasharray="8 3 2 3"/>
<path d="M453.5,500.5 H461" stroke="#e0e0e0" stroke-width="2.3" stroke-dasharray="2 0.6"/><path d="M460.5,501.8 L466,501.8 L463.2,504.7 Z" stroke="#bbb" stroke-width="0.8" fill="none"/>
<path d="M935.5,500.5 H943" stroke="#e0e0e0" stroke-width="2.3" stroke-dasharray="2 0.6"/><path d="M930,501.8 L935.5,501.8 L932.7,504.7 Z" stroke="#bbb" stroke-width="0.8" fill="none"/>
<path d="M463,513.5 H499" stroke="#cc2020" stroke-width="1.1" stroke-dasharray="8 3 2 3"/>
<path d="M898,513.5 H934" stroke="#cc2020" stroke-width="1.1" stroke-dasharray="8 3 2 3"/>
<path d="M453.5,509.0 H461" stroke="#e0e0e0" stroke-width="2.3" stroke-dasharray="2 0.6"/><path d="M460.5,510.3 L466,510.3 L463.2,513.2 Z" stroke="#bbb" stroke-width="0.8" fill="none"/>
<path d="M935.5,509.0 H943" stroke="#e0e0e0" stroke-width="2.3" stroke-dasharray="2 0.6"/><path d="M930,510.3 L935.5,510.3 L932.7,513.2 Z" stroke="#bbb" stroke-width="0.8" fill="none"/>
<path d="M463,572.5 H499" stroke="#cc2020" stroke-width="1.1" stroke-dasharray="8 3 2 3"/>
<path d="M898,572.5 H934" stroke="#cc2020" stroke-width="1.1" stroke-dasharray="8 3 2 3"/>
<path d="M453.5,568.0 H461" stroke="#e0e0e0" stroke-width="2.3" stroke-dasharray="2 0.6"/><path d="M460.5,569.3 L466,569.3 L463.2,572.2 Z" stroke="#bbb" stroke-width="0.8" fill="none"/>
<path d="M935.5,568.0 H943" stroke="#e0e0e0" stroke-width="2.3" stroke-dasharray="2 0.6"/><path d="M930,569.3 L935.5,569.3 L932.7,572.2 Z" stroke="#bbb" stroke-width="0.8" fill="none"/>
<path d="M626,281 H636 M628,284 L630,281.5 L632,284" stroke="#ddd" stroke-width="1.3" fill="none"/>
<path d="M540.6,285 V273.6 H553.4000000000001" stroke="#22d422" stroke-width="1.1" fill="none"/>
<circle cx="557.7" cy="273.6" r="4.3" fill="none" stroke="#22d422" stroke-width="1.1"/><path d="M553.7,273.6 H561.7" stroke="#22d422" stroke-width="0.8"/>
<path d="M540.6,271.1 H552.7" stroke="#e8e8e8" stroke-width="2.2" stroke-dasharray="2 0.7"/>
<path d="M557.7,271.1 V272.6 M556.7,276.1 H558.7" stroke="#eee" stroke-width="1.6"/>
<path d="M575.3,297 V263.5 H595" stroke="#22d422" stroke-width="1.1" fill="none"/>
<path d="M575.3,261.0 H595" stroke="#e8e8e8" stroke-width="2" stroke-dasharray="2 0.7"/>
<circle cx="575.3" cy="297" r="1" fill="#22d422"/>
<path d="M540.6,326 V312.5 H553.4000000000001" stroke="#22d422" stroke-width="1.1" fill="none"/>
<circle cx="557.7" cy="312.5" r="4.3" fill="none" stroke="#22d422" stroke-width="1.1"/><path d="M553.7,312.5 H561.7" stroke="#22d422" stroke-width="0.8"/>
<path d="M540.6,310.0 H552.7" stroke="#e8e8e8" stroke-width="2.2" stroke-dasharray="2 0.7"/>
<path d="M557.7,310.0 V311.5 M556.7,315.0 H558.7" stroke="#eee" stroke-width="1.6"/>
<path d="M540.6,417 V401 H553.4000000000001" stroke="#22d422" stroke-width="1.1" fill="none"/>
<circle cx="557.7" cy="401" r="4.3" fill="none" stroke="#22d422" stroke-width="1.1"/><path d="M553.7,401 H561.7" stroke="#22d422" stroke-width="0.8"/>
<path d="M540.6,398.5 H552.7" stroke="#e8e8e8" stroke-width="2.2" stroke-dasharray="2 0.7"/>
<path d="M557.7,398.5 V400 M556.7,403.5 H558.7" stroke="#eee" stroke-width="1.6"/>
<path d="M754.8,284 V273.5 H768.2" stroke="#22d422" stroke-width="1.1" fill="none"/>
<circle cx="772.5" cy="273.5" r="4.3" fill="none" stroke="#22d422" stroke-width="1.1"/><path d="M768.5,273.5 H776.5" stroke="#22d422" stroke-width="0.8"/>
<path d="M754.8,271.0 H767.5" stroke="#e8e8e8" stroke-width="2.2" stroke-dasharray="2 0.7"/>
<path d="M772.5,271.0 V272.5 M771.5,276.0 H773.5" stroke="#eee" stroke-width="1.6"/>
<path d="M773.3,295 V262 H800" stroke="#22d422" stroke-width="1.1" fill="none"/>
<path d="M773.3,259.5 H800" stroke="#e8e8e8" stroke-width="2" stroke-dasharray="2 0.7"/>
<circle cx="773.3" cy="295" r="1" fill="#22d422"/>
<path d="M831.4,297 V262 H858" stroke="#22d422" stroke-width="1.1" fill="none"/>
<path d="M831.4,259.5 H858" stroke="#e8e8e8" stroke-width="2" stroke-dasharray="2 0.7"/>
<circle cx="831.4" cy="297" r="1" fill="#22d422"/>
<path d="M848.8,284 V273.5 H861.7" stroke="#22d422" stroke-width="1.1" fill="none"/>
<circle cx="866" cy="273.5" r="4.3" fill="none" stroke="#22d422" stroke-width="1.1"/><path d="M862,273.5 H870" stroke="#22d422" stroke-width="0.8"/>
<path d="M848.8,271.0 H861" stroke="#e8e8e8" stroke-width="2.2" stroke-dasharray="2 0.7"/>
<path d="M866,271.0 V272.5 M865,276.0 H867" stroke="#eee" stroke-width="1.6"/>
<path d="M754.8,326 V313 H768.2" stroke="#22d422" stroke-width="1.1" fill="none"/>
<circle cx="772.5" cy="313" r="4.3" fill="none" stroke="#22d422" stroke-width="1.1"/><path d="M768.5,313 H776.5" stroke="#22d422" stroke-width="0.8"/>
<path d="M754.8,310.5 H767.5" stroke="#e8e8e8" stroke-width="2.2" stroke-dasharray="2 0.7"/>
<path d="M772.5,310.5 V312 M771.5,315.5 H773.5" stroke="#eee" stroke-width="1.6"/>
<path d="M848.8,326 V313 H861.7" stroke="#22d422" stroke-width="1.1" fill="none"/>
<circle cx="866" cy="313" r="4.3" fill="none" stroke="#22d422" stroke-width="1.1"/><path d="M862,313 H870" stroke="#22d422" stroke-width="0.8"/>
<path d="M848.8,310.5 H861" stroke="#e8e8e8" stroke-width="2.2" stroke-dasharray="2 0.7"/>
<path d="M866,310.5 V312 M865,315.5 H867" stroke="#eee" stroke-width="1.6"/>
<path d="M754.8,415 V396 H768.2" stroke="#22d422" stroke-width="1.1" fill="none"/>
<circle cx="772.5" cy="396" r="4.3" fill="none" stroke="#22d422" stroke-width="1.1"/><path d="M768.5,396 H776.5" stroke="#22d422" stroke-width="0.8"/>
<path d="M754.8,393.5 H767.5" stroke="#e8e8e8" stroke-width="2.2" stroke-dasharray="2 0.7"/>
<path d="M772.5,393.5 V395 M771.5,398.5 H773.5" stroke="#eee" stroke-width="1.6"/>
<path d="M848.8,415 V396 H861.7" stroke="#22d422" stroke-width="1.1" fill="none"/>
<circle cx="866" cy="396" r="4.3" fill="none" stroke="#22d422" stroke-width="1.1"/><path d="M862,396 H870" stroke="#22d422" stroke-width="0.8"/>
<path d="M848.8,393.5 H861" stroke="#e8e8e8" stroke-width="2.2" stroke-dasharray="2 0.7"/>
<path d="M866,393.5 V395 M865,398.5 H867" stroke="#eee" stroke-width="1.6"/>
<path d="M754.8,507 V488 H768.2" stroke="#22d422" stroke-width="1.1" fill="none"/>
<circle cx="772.5" cy="488" r="4.3" fill="none" stroke="#22d422" stroke-width="1.1"/><path d="M768.5,488 H776.5" stroke="#22d422" stroke-width="0.8"/>
<path d="M754.8,485.5 H767.5" stroke="#e8e8e8" stroke-width="2.2" stroke-dasharray="2 0.7"/>
<path d="M772.5,485.5 V487 M771.5,490.5 H773.5" stroke="#eee" stroke-width="1.6"/>
<path d="M848.8,507 V488 H861.7" stroke="#22d422" stroke-width="1.1" fill="none"/>
<circle cx="866" cy="488" r="4.3" fill="none" stroke="#22d422" stroke-width="1.1"/><path d="M862,488 H870" stroke="#22d422" stroke-width="0.8"/>
<path d="M848.8,485.5 H861" stroke="#e8e8e8" stroke-width="2.2" stroke-dasharray="2 0.7"/>
<path d="M866,485.5 V487 M865,490.5 H867" stroke="#eee" stroke-width="1.6"/>
<path d="M867,571 V556.5 H879.2" stroke="#22d422" stroke-width="1.1" fill="none"/>
<circle cx="883.5" cy="556.5" r="4.3" fill="none" stroke="#22d422" stroke-width="1.1"/><path d="M879.5,556.5 H887.5" stroke="#22d422" stroke-width="0.8"/>
<path d="M867,554.0 H878.5" stroke="#e8e8e8" stroke-width="2.2" stroke-dasharray="2 0.7"/>
<path d="M883.5,554.0 V555.5 M882.5,559.0 H884.5" stroke="#eee" stroke-width="1.6"/>
<path d="M510,482 H518" stroke="#eee" stroke-width="1.8"/>
<path d="M535,489 H543" stroke="#eee" stroke-width="1.8"/>
<path d="M620,489 H628" stroke="#eee" stroke-width="1.8"/>
<path d="M574,527 H582" stroke="#eee" stroke-width="1.8"/>
<path d="M790,527 H798" stroke="#eee" stroke-width="1.8"/>
<path d="M648,508 H656" stroke="#eee" stroke-width="1.8"/>
<path d="M620,284 H628" stroke="#eee" stroke-width="1.8"/>
<rect x="990.5" y="302.8" width="14" height="8.5" rx="1.5" fill="url(#pG)" stroke="#d8d8d8" stroke-width="1.1"/>
<path d="M1007,307.1 H1029" stroke="#ddd" stroke-width="1.8" stroke-dasharray="2.5 0.6"/>
<rect x="990.5" y="315.8" width="14" height="8.5" rx="1.5" fill="url(#pD)" stroke="#d8d8d8" stroke-width="1.1"/>
<path d="M1007,320.1 H1031" stroke="#ddd" stroke-width="1.8" stroke-dasharray="2.5 0.6"/>
<rect x="990.5" y="327.4" width="14" height="8.5" rx="1.5" fill="url(#pS)" stroke="#d8d8d8" stroke-width="1.1"/>
<path d="M1007,331.7 H1013" stroke="#ddd" stroke-width="1.8" stroke-dasharray="2.5 0.6"/>
<rect x="990.5" y="339.8" width="14" height="8.5" rx="1.5" fill="#111" stroke="#d8d8d8" stroke-width="1.1"/>
<path d="M1007,344.1 H1015" stroke="#ddd" stroke-width="1.8" stroke-dasharray="2.5 0.6"/>
<rect x="990.5" y="352.5" width="14" height="8.5" rx="1.5" fill="url(#pS)" stroke="#d8d8d8" stroke-width="1.1"/>
<path d="M1007,356.8 H1014" stroke="#ddd" stroke-width="1.8" stroke-dasharray="2.5 0.6"/>
<rect x="990.5" y="365" width="14" height="8.5" rx="1.5" fill="url(#pX)" stroke="#d8d8d8" stroke-width="1.1"/>
<path d="M1007,369.3 H1014" stroke="#ddd" stroke-width="1.8" stroke-dasharray="2.5 0.6"/>
<rect x="990.5" y="377.4" width="14" height="8.5" rx="1.5" fill="url(#pG)" stroke="#d8d8d8" stroke-width="1.1"/>
<path d="M1007,381.7 H1013" stroke="#ddd" stroke-width="1.8" stroke-dasharray="2.5 0.6"/>
<text x="676" y="620.3" font-size="9" font-weight="bold" font-family="Liberation Sans" fill="#e8e8e8" textLength="37" lengthAdjust="spacingAndGlyphs">1-6轴立面图</text><text x="714" y="620.3" font-size="5" font-family="Liberation Sans" fill="#ddd" textLength="9" lengthAdjust="spacingAndGlyphs">1:100</text>
<path d="M675,623 H724" stroke="#f4f4f4" stroke-width="2"/>
<path d="M207,699.5 V726.3 H234.8" stroke="#1a9ed0" stroke-width="1.3" fill="none"/>
<path d="M210.5,689.5 L214,694 M217,689.5 L211,697.5" stroke="#1a9ed0" stroke-width="1.2"/>
<path d="M238.5,716.5 L245,724 M245,716.5 L238.5,724" stroke="#1a9ed0" stroke-width="1.2"/>
</svg>
<!--/CANVAS--></div>
<div class="t" style="left:183px;top:762px;font-size:12px;color:#222">绘图 1: <span style="color:#3a78c8">100</span></div>
<div class="a" style="left:252px;top:759px;width:17px;height:18px;background:#ececec"></div>
<svg style="left:258px;top:766px" width="6" height="4"><path d="M0.5,0.5 L3,3 L5.5,0.5" fill="none" stroke="#555"/></svg>
<div class="t" style="left:277px;top:762px;font-size:12px;color:#222">出图 1: <span style="color:#3a78c8">100</span></div>
<div class="a" style="left:346px;top:759px;width:17px;height:18px;background:#ececec"></div>
<svg style="left:352px;top:766px" width="6" height="4"><path d="M0.5,0.5 L3,3 L5.5,0.5" fill="none" stroke="#555"/></svg>
<svg style="left:0;top:0" width="1591" height="830" viewBox="0 0 1591 830">
<g fill="none" stroke="#888" stroke-width="1.1">
 <path d="M373,768 Q382,758 391,768 Q382,778 373,768 Z"/><circle cx="382" cy="768" r="3.5"/><circle cx="382" cy="768" r="1.5"/>
 <path d="M375,776 L391,759" stroke="#4aa8e0" stroke-width="1.2"/>
 <g stroke="#777"><circle cx="407" cy="761" r="2.4"/><circle cx="413.5" cy="761" r="2.4"/><circle cx="420" cy="761" r="2.4"/><circle cx="407" cy="767.5" r="2.4"/><circle cx="413.5" cy="767.5" r="2.4"/><circle cx="420" cy="767.5" r="2.4"/><circle cx="407" cy="774" r="2.4"/><circle cx="413.5" cy="774" r="2.4"/><circle cx="420" cy="774" r="2.4"/></g>
 <path d="M435,768 Q445.5,757 456,768 Q445.5,779 435,768 Z"/><circle cx="445.5" cy="768" r="4"/><circle cx="445.5" cy="768" r="1.8"/>
 <path d="M472,767 L472,763 Q472,759 477,759 Q482,759 482,763 L482,767" stroke="#777"/><rect x="470.5" y="767" width="13" height="9" rx="1.5" stroke="#777"/><path d="M474,771.5 L477,769.5 L480,771.5 L477,773.5 Z" stroke-width="0.9"/>
 <path d="M503,763 Q499,769 503,774 Q508,778 514,774 Q518,769 515,763" stroke="#555"/><path d="M507,760 L512,760" stroke="#555"/><path d="M511,758 L514,760 L511,762 Z" fill="#555"/>
 <path d="M534,763 Q530,769 534,774 Q539,778 545,774 Q549,769 546,763" stroke="#555"/><path d="M538,760 L543,760" stroke="#555"/><path d="M542,758 L545,760 L542,762 Z" fill="#555"/>
</g>
<rect x="505" y="764" width="8" height="7" rx="2" fill="#3aa0e0"/><rect x="507" y="761" width="4" height="4" fill="#3aa0e0"/>
<rect x="536" y="764" width="8" height="7" rx="2" fill="#3aa0e0"/><rect x="538" y="761" width="4" height="4" fill="#3aa0e0"/>
<path d="M565,761 L582,761 L578,775 L561,775 Z" fill="#56bde8" stroke="#3a9cd0" stroke-width="0.8"/><path d="M571,761 L575,761 L571,775 L567,775 Z" fill="#333"/>
<g stroke="#4a5562" stroke-width="2" fill="none"><path d="M597,774 L610,761"/></g>
<path d="M595,776 L595,769 L602,776 Z M612,759 L612,766 L605,759 Z" fill="#4a5562"/>
<g fill="none" stroke="#666" stroke-width="1.1">
 <path d="M630,764 L640,764 L640,772 L630,772 Z M630,760 V776 M640,760 V776 M627,764 H643 M627,772 H643"/>
</g>
<path d="M657,762 L670,762 L670,759 L675,763.5 L670,768 L670,765 L657,765 Z" fill="#8fd06a" stroke="#6aa84f" stroke-width="0.7"/>
<rect x="657" y="769" width="18" height="7" fill="#fff" stroke="#666" stroke-width="0.9"/>
<text x="666" y="775" font-size="6" font-family="Liberation Sans" fill="#444" text-anchor="middle">DWG</text>
<path d="M689,761.5 H706 M689,775.5 H706" stroke="#666" stroke-width="1"/>
<rect x="689" y="766" width="4.5" height="4" rx="1" fill="#e8822a"/><rect x="695.5" y="766" width="4.5" height="4" rx="1" fill="#e8822a"/><rect x="702" y="766" width="4.5" height="4" rx="1" fill="#e8822a"/>
<g fill="none" stroke="#777" stroke-width="1"><path d="M728,759 L735,762.5 L735,769.5 L728,773 L721,769.5 L721,762.5 Z M721,762.5 L728,766 L735,762.5 M728,766 V773"/><path d="M719,770 Q728,779 737,770"/></g>
<path d="M727,775 L730,776.5 L727,778 Z" fill="#333"/>
<g fill="none" stroke="#888" stroke-width="1.1"><path d="M752,760 L768,760 L762,767 L762,776 L758,776 L758,767 Z"/></g>
<rect x="762" y="765" width="8" height="8" fill="#fff" stroke="#888" stroke-width="0.9"/><path d="M763.5,768.5 L765.5,770.5 L769.5,765.5" stroke="#2a9a5a" stroke-width="1.3" fill="none"/>
<rect x="782.5" y="759.5" width="11" height="9" fill="#eee" stroke="#999"/><rect x="788.5" y="765.5" width="12" height="10" fill="#b8dcf2" stroke="#5aaee6"/>
<rect x="814.5" y="759.5" width="11" height="9" fill="#eee" stroke="#999"/><rect x="820.5" y="765.5" width="12" height="10" fill="#f4f4f4" stroke="#999"/><rect x="817" y="762" width="9" height="6" fill="none" stroke="#9ec8ee"/>
<rect x="846.5" y="759.5" width="12" height="16" fill="#f0f0f0" stroke="#9ec8ee"/>
<path d="M853.5,767.5 H862.5 M858,763 V772" stroke="#111" stroke-width="2"/>
</svg>

<!-- CENTER END -->


<!-- right project browser -->
<!-- RP START -->
<div class="a" style="left:1427px;top:123px;width:163px;height:655px;background:#fff;border:1px solid #cfcfcf;border-radius:2px"></div>
<div class="t" style="left:1429px;top:126px;font-size:10px;color:#222">项目浏览器 - 2#建筑</div>
<svg style="left:1549px;top:131px" width="7" height="4"><path d="M0,0 L7,0 L3.5,4 Z" fill="#111"/></svg>
<svg style="left:1565px;top:129px" width="8" height="11"><path d="M2.5,1 L5.5,1 L5.5,6.5 L6.8,7.5 L6.8,8.3 L1.2,8.3 L1.2,7.5 L2.5,6.5 Z" fill="#999" stroke="#111" stroke-width="1"/><path d="M4,8.3 L4,11" stroke="#111"/></svg>
<svg style="left:1578px;top:129.5px" width="9" height="8"><path d="M0.5,0.5 L8,7.5 M8,0.5 L0.5,7.5" stroke="#111" stroke-width="1.3"/></svg>
<div class="a" style="left:1429px;top:141px;width:161px;height:635px;background:#fff;border:1px solid #a0a8bc;border-right:none"></div>
<div id="tree" class="a" style="left:1430px;top:142px;width:146px;height:620px;overflow:hidden">
<div class="t" style="left:17px;top:4.5px;font-size:10px;font-weight:bold;color:#111">三维视图</div>
<div class="t" style="left:33.5px;top:19.7px;font-size:10px;color:#222">三维视图(全楼)</div>
<div class="t" style="left:17px;top:35.6px;font-size:10px;font-weight:bold;color:#111">轴网平面</div>
<div class="t" style="left:33.5px;top:51.1px;font-size:10px;color:#222">轴网平面_1</div>
<div class="t" style="left:17px;top:66.5px;font-size:10px;font-weight:bold;color:#111">楼层平面</div>
<div class="t" style="left:48.5px;top:82.2px;font-size:10px;color:#2e96e0">非标</div>
<div class="t" style="left:71px;top:82.2px;font-size:10px;color:#222">女儿墙29.600(m)平面</div>
<div class="t" style="left:48.5px;top:97.8px;font-size:10px;color:#2e96e0">非标</div>
<div class="t" style="left:71px;top:97.8px;font-size:10px;color:#222">TF34.600(m)平面</div>
<div class="t" style="left:48.5px;top:113.2px;font-size:10px;color:#2e96e0">非标</div>
<div class="t" style="left:71px;top:113.2px;font-size:10px;color:#222">RF29.600(m)平面</div>
<div class="t" style="left:48.5px;top:128.8px;font-size:10px;color:#2e96e0">非标</div>
<div class="t" style="left:71px;top:128.8px;font-size:10px;color:#222">24.200(m)平面</div>
<div class="t" style="left:48.5px;top:144.1px;font-size:10px;color:#2e96e0">非标</div>
<div class="t" style="left:71px;top:144.1px;font-size:10px;color:#222">18.800(m)平面</div>
<div class="t" style="left:48.5px;top:159.3px;font-size:10px;color:#2e96e0">非标</div>
<div class="t" style="left:71px;top:159.3px;font-size:10px;color:#222">13.400(m)平面</div>
<div class="t" style="left:48.5px;top:174.8px;font-size:10px;color:#2e96e0">非标</div>
<div class="t" style="left:71px;top:174.8px;font-size:10px;color:#222">8.000(m)平面</div>
<div class="t" style="left:48.5px;top:190.3px;font-size:10px;color:#2e96e0">非标</div>
<div class="t" style="left:71px;top:190.3px;font-size:10px;color:#222">0.000(m)平面</div>
<div class="t" style="left:48.5px;top:205.8px;font-size:10px;color:#2e96e0">非标</div>
<div class="t" style="left:71px;top:205.8px;font-size:10px;color:#222">7.000(m)平面</div>
<div class="t" style="left:48.5px;top:221.1px;font-size:10px;color:#2e96e0">非标</div>
<div class="t" style="left:71px;top:221.1px;font-size:10px;color:#222">-5.200(m)平面</div>
<div class="t" style="left:17px;top:237.0px;font-size:10px;font-weight:bold;color:#111">剖面视图</div>
<div class="t" style="left:33.5px;top:252.7px;font-size:10px;color:#222">ST2-ST2剖面</div>
<div class="t" style="left:33.5px;top:268.3px;font-size:10px;color:#222">ST1-ST1剖面</div>
<div class="t" style="left:33.5px;top:283.8px;font-size:10px;color:#222">东立-东立剖面</div>
<div class="t" style="left:33.5px;top:299.3px;font-size:10px;color:#222">北立-北立剖面</div>
<div class="t" style="left:33.5px;top:314.5px;font-size:10px;color:#222">西立-西立剖面</div>
<div class="t" style="left:33.5px;top:330.0px;font-size:10px;color:#222">南立-南立剖面</div>
<div class="a" style="left:32px;top:344.5px;width:38px;height:13px;background:#2f7de1"></div>
<div class="t" style="left:33.5px;top:345.5px;font-size:10px;color:#fff">1-1剖面</div>
<div class="t" style="left:33.5px;top:361.5px;font-size:10px;color:#222">ST3-ST3剖面</div>
<div class="t" style="left:17px;top:377.2px;font-size:10px;font-weight:bold;color:#111">立面视图</div>
<div class="t" style="left:17px;top:392.5px;font-size:10px;font-weight:bold;color:#111">面积平面</div>
<div class="t" style="left:33.5px;top:408.0px;font-size:10px;color:#222">0.000(m)平面_防火分区</div>
<div class="t" style="left:33.5px;top:423.5px;font-size:10px;color:#222">8.000(m)平面_防火分区</div>
<div class="t" style="left:33.5px;top:439.0px;font-size:10px;color:#222">13.400(m)平面_防火分区</div>
<div class="t" style="left:33.5px;top:454.3px;font-size:10px;color:#222">18.800(m)平面_防火分区</div>
<div class="t" style="left:33.5px;top:469.5px;font-size:10px;color:#222">24.200(m)平面_防火分区</div>
<div class="t" style="left:17px;top:485.2px;font-size:10px;font-weight:bold;color:#111">提资视图</div>
<div class="t" style="left:17px;top:501.6px;font-size:10px;font-weight:bold;color:#111">图纸-目录</div>
<div class="t" style="left:33.5px;top:516.8px;font-size:10px;color:#222">图纸目录（一）</div>
<div class="t" style="left:17px;top:532.5px;font-size:10px;font-weight:bold;color:#111">图纸-设计说明</div>
<div class="t" style="left:17px;top:548.2px;font-size:10px;font-weight:bold;color:#111">图纸-平面图</div>
<div class="t" style="left:33.5px;top:563.5px;font-size:10px;color:#222">一层平面图</div>
<div class="t" style="left:33.5px;top:579.0px;font-size:10px;color:#222">二层平面图</div>
<div class="t" style="left:33.5px;top:594.5px;font-size:10px;color:#222">三层平面图</div>
<div class="t" style="left:33.5px;top:609.8px;font-size:10px;color:#222">四层平面图</div>
<svg style="left:0;top:0" width="146" height="620" viewBox="1430 142 146 620">
<path d="M1438.5,157 V700" fill="none" stroke="#a0a0a0" stroke-width="1" stroke-dasharray="1 2"/>
<rect x="1434.5" y="147.5" width="8.5" height="8.5" fill="#f4f4f4" stroke="#999" stroke-width="1"/><path d="M1436.5,152 H1441" stroke="#333" stroke-width="1"/>
<path d="M1454.5,158.2 V167.2 H1462" fill="none" stroke="#a0a0a0" stroke-width="1" stroke-dasharray="1 2"/>
<rect x="1434.5" y="178.6" width="8.5" height="8.5" fill="#f4f4f4" stroke="#999" stroke-width="1"/><path d="M1436.5,183.1 H1441" stroke="#333" stroke-width="1"/>
<path d="M1454.5,189.6 V198.6 H1462" fill="none" stroke="#a0a0a0" stroke-width="1" stroke-dasharray="1 2"/>
<rect x="1434.5" y="209.5" width="8.5" height="8.5" fill="#f4f4f4" stroke="#999" stroke-width="1"/><path d="M1436.5,214 H1441" stroke="#333" stroke-width="1"/>
<path d="M1454.5,220.7 V229.7 H1462" fill="none" stroke="#a0a0a0" stroke-width="1" stroke-dasharray="1 2"/>
<path d="M1467,228.7 V226.2 Q1467,223.2 1470,223.2 Q1473,223.2 1473,226.2" fill="none" stroke="#4aa8e8" stroke-width="1.1"/><rect x="1465.5" y="228.2" width="9" height="6.5" rx="1" fill="#fff" stroke="#4aa8e8" stroke-width="1.1"/><path d="M1470,230.2 V232.2" stroke="#4aa8e8" stroke-width="1"/>
<path d="M1454.5,236.3 V245.3 H1462" fill="none" stroke="#a0a0a0" stroke-width="1" stroke-dasharray="1 2"/>
<path d="M1467,244.3 V241.8 Q1467,238.8 1470,238.8 Q1473,238.8 1473,241.8" fill="none" stroke="#4aa8e8" stroke-width="1.1"/><rect x="1465.5" y="243.8" width="9" height="6.5" rx="1" fill="#fff" stroke="#4aa8e8" stroke-width="1.1"/><path d="M1470,245.8 V247.8" stroke="#4aa8e8" stroke-width="1"/>
<path d="M1454.5,251.7 V260.7 H1462" fill="none" stroke="#a0a0a0" stroke-width="1" stroke-dasharray="1 2"/>
<path d="M1467,259.7 V257.2 Q1467,254.2 1470,254.2 Q1473,254.2 1473,257.2" fill="none" stroke="#4aa8e8" stroke-width="1.1"/><rect x="1465.5" y="259.2" width="9" height="6.5" rx="1" fill="#fff" stroke="#4aa8e8" stroke-width="1.1"/><path d="M1470,261.2 V263.2" stroke="#4aa8e8" stroke-width="1"/>
<path d="M1454.5,267.3 V276.3 H1462" fill="none" stroke="#a0a0a0" stroke-width="1" stroke-dasharray="1 2"/>
<path d="M1467,275.3 V272.8 Q1467,269.8 1470,269.8 Q1473,269.8 1473,272.8" fill="none" stroke="#4aa8e8" stroke-width="1.1"/><rect x="1465.5" y="274.8" width="9" height="6.5" rx="1" fill="#fff" stroke="#4aa8e8" stroke-width="1.1"/><path d="M1470,276.8 V278.8" stroke="#4aa8e8" stroke-width="1"/>
<path d="M1454.5,282.6 V291.6 H1462" fill="none" stroke="#a0a0a0" stroke-width="1" stroke-dasharray="1 2"/>
<path d="M1467,290.6 V288.1 Q1467,285.1 1470,285.1 Q1473,285.1 1473,288.1" fill="none" stroke="#4aa8e8" stroke-width="1.1"/><rect x="1465.5" y="290.1" width="9" height="6.5" rx="1" fill="#fff" stroke="#4aa8e8" stroke-width="1.1"/><path d="M1470,292.1 V294.1" stroke="#4aa8e8" stroke-width="1"/>
<path d="M1454.5,297.8 V306.8 H1462" fill="none" stroke="#a0a0a0" stroke-width="1" stroke-dasharray="1 2"/>
<path d="M1467,305.8 V303.3 Q1467,300.3 1470,300.3 Q1473,300.3 1473,303.3" fill="none" stroke="#4aa8e8" stroke-width="1.1"/><rect x="1465.5" y="305.3" width="9" height="6.5" rx="1" fill="#fff" stroke="#4aa8e8" stroke-width="1.1"/><path d="M1470,307.3 V309.3" stroke="#4aa8e8" stroke-width="1"/>
<path d="M1454.5,313.3 V322.3 H1462" fill="none" stroke="#a0a0a0" stroke-width="1" stroke-dasharray="1 2"/>
<path d="M1467,321.3 V318.8 Q1467,315.8 1470,315.8 Q1473,315.8 1473,318.8" fill="none" stroke="#4aa8e8" stroke-width="1.1"/><rect x="1465.5" y="320.8" width="9" height="6.5" rx="1" fill="#fff" stroke="#4aa8e8" stroke-width="1.1"/><path d="M1470,322.8 V324.8" stroke="#4aa8e8" stroke-width="1"/>
<path d="M1454.5,328.8 V337.8 H1462" fill="none" stroke="#a0a0a0" stroke-width="1" stroke-dasharray="1 2"/>
<path d="M1467,336.8 V334.3 Q1467,331.3 1470,331.3 Q1473,331.3 1473,334.3" fill="none" stroke="#4aa8e8" stroke-width="1.1"/><rect x="1465.5" y="336.3" width="9" height="6.5" rx="1" fill="#fff" stroke="#4aa8e8" stroke-width="1.1"/><path d="M1470,338.3 V340.3" stroke="#4aa8e8" stroke-width="1"/>
<path d="M1454.5,344.3 V353.3 H1462" fill="none" stroke="#a0a0a0" stroke-width="1" stroke-dasharray="1 2"/>
<path d="M1467,352.3 V349.8 Q1467,346.8 1470,346.8 Q1473,346.8 1473,349.8" fill="none" stroke="#4aa8e8" stroke-width="1.1"/><rect x="1465.5" y="351.8" width="9" height="6.5" rx="1" fill="#fff" stroke="#4aa8e8" stroke-width="1.1"/><path d="M1470,353.8 V355.8" stroke="#4aa8e8" stroke-width="1"/>
<path d="M1454.5,359.6 V368.6 H1462" fill="none" stroke="#a0a0a0" stroke-width="1" stroke-dasharray="1 2"/>
<path d="M1467,367.6 V365.1 Q1467,362.1 1470,362.1 Q1473,362.1 1473,365.1" fill="none" stroke="#4aa8e8" stroke-width="1.1"/><rect x="1465.5" y="367.1" width="9" height="6.5" rx="1" fill="#fff" stroke="#4aa8e8" stroke-width="1.1"/><path d="M1470,369.1 V371.1" stroke="#4aa8e8" stroke-width="1"/>
<rect x="1434.5" y="380.0" width="8.5" height="8.5" fill="#f4f4f4" stroke="#999" stroke-width="1"/><path d="M1436.5,384.5 H1441" stroke="#333" stroke-width="1"/>
<path d="M1454.5,391.2 V400.2 H1462" fill="none" stroke="#a0a0a0" stroke-width="1" stroke-dasharray="1 2"/>
<path d="M1454.5,406.8 V415.8 H1462" fill="none" stroke="#a0a0a0" stroke-width="1" stroke-dasharray="1 2"/>
<path d="M1454.5,422.3 V431.3 H1462" fill="none" stroke="#a0a0a0" stroke-width="1" stroke-dasharray="1 2"/>
<path d="M1454.5,437.8 V446.8 H1462" fill="none" stroke="#a0a0a0" stroke-width="1" stroke-dasharray="1 2"/>
<path d="M1454.5,453 V462 H1462" fill="none" stroke="#a0a0a0" stroke-width="1" stroke-dasharray="1 2"/>
<path d="M1454.5,468.5 V477.5 H1462" fill="none" stroke="#a0a0a0" stroke-width="1" stroke-dasharray="1 2"/>
<path d="M1454.5,484 V493 H1462" fill="none" stroke="#a0a0a0" stroke-width="1" stroke-dasharray="1 2"/>
<path d="M1454.5,500 V509 H1462" fill="none" stroke="#a0a0a0" stroke-width="1" stroke-dasharray="1 2"/>
<path d="M1438.5,524.7 H1446" fill="none" stroke="#a0a0a0" stroke-width="1" stroke-dasharray="1 2"/>
<rect x="1434.5" y="535.5" width="8.5" height="8.5" fill="#f4f4f4" stroke="#999" stroke-width="1"/><path d="M1436.5,540 H1441" stroke="#333" stroke-width="1"/>
<path d="M1454.5,546.5 V555.5 H1462" fill="none" stroke="#a0a0a0" stroke-width="1" stroke-dasharray="1 2"/>
<path d="M1454.5,562 V571 H1462" fill="none" stroke="#a0a0a0" stroke-width="1" stroke-dasharray="1 2"/>
<path d="M1454.5,577.5 V586.5 H1462" fill="none" stroke="#a0a0a0" stroke-width="1" stroke-dasharray="1 2"/>
<path d="M1454.5,592.8 V601.8 H1462" fill="none" stroke="#a0a0a0" stroke-width="1" stroke-dasharray="1 2"/>
<path d="M1454.5,608 V617 H1462" fill="none" stroke="#a0a0a0" stroke-width="1" stroke-dasharray="1 2"/>
<path d="M1438.5,632.7 H1446" fill="none" stroke="#a0a0a0" stroke-width="1" stroke-dasharray="1 2"/>
<rect x="1434.5" y="644.6" width="8.5" height="8.5" fill="#f4f4f4" stroke="#999" stroke-width="1"/><path d="M1436.5,649.1 H1441" stroke="#333" stroke-width="1"/>
<path d="M1454.5,655.3 V664.3 H1462" fill="none" stroke="#a0a0a0" stroke-width="1" stroke-dasharray="1 2"/>
<path d="M1438.5,680 H1446" fill="none" stroke="#a0a0a0" stroke-width="1" stroke-dasharray="1 2"/>
<rect x="1434.5" y="691.2" width="8.5" height="8.5" fill="#f4f4f4" stroke="#999" stroke-width="1"/><path d="M1436.5,695.7 H1441" stroke="#333" stroke-width="1"/>
<path d="M1454.5,702 V711 H1462" fill="none" stroke="#a0a0a0" stroke-width="1" stroke-dasharray="1 2"/>
<path d="M1454.5,717.5 V726.5 H1462" fill="none" stroke="#a0a0a0" stroke-width="1" stroke-dasharray="1 2"/>
<path d="M1454.5,733 V742 H1462" fill="none" stroke="#a0a0a0" stroke-width="1" stroke-dasharray="1 2"/>
<path d="M1454.5,748.3 V757.3 H1462" fill="none" stroke="#a0a0a0" stroke-width="1" stroke-dasharray="1 2"/>
</svg>
</div>
<div class="a" style="left:1576px;top:143px;width:13px;height:618px;background:#fff;border-left:1px solid #e4e4e4"></div>
<div class="a" style="left:1576px;top:143px;width:13px;height:14px;background:#fff;border:1px solid #d8d4cc"></div>
<svg style="left:1579px;top:148px" width="7" height="4"><path d="M0,4 L7,4 L3.5,0 Z" fill="#111"/></svg>
<div class="a" style="left:1576px;top:157px;width:13px;height:411px;background:#fff;border:1px solid #d8d4cc"></div>
<div class="a" style="left:1576px;top:746px;width:13px;height:15px;background:#fff;border:1px solid #d8d4cc"></div>
<svg style="left:1579px;top:751px" width="7" height="4"><path d="M0,0 L7,0 L3.5,4 Z" fill="#111"/></svg>
<div class="a" style="left:1430px;top:762px;width:146px;height:13px;background:#fff"></div>
<div class="a" style="left:1431px;top:762px;width:14px;height:13px;background:#fff;border:1px solid #d8d4cc"></div>
<svg style="left:1436px;top:765px" width="4" height="7"><path d="M4,0 L4,7 L0,3.5 Z" fill="#111"/></svg>
<div class="a" style="left:1445px;top:762px;width:98px;height:13px;background:#fff;border:1px solid #d8d4cc"></div>
<div class="a" style="left:1560px;top:762px;width:15px;height:13px;background:#fff;border:1px solid #d8d4cc"></div>
<svg style="left:1566px;top:765px" width="4" height="7"><path d="M0,0 L0,7 L4,3.5 Z" fill="#111"/></svg>
<div class="a" style="left:1576px;top:761px;width:13px;height:14px;background:#f0f0f0"></div>

<!-- RP END -->

<!-- command area -->
<!-- BOTTOM START -->
<div class="a" style="left:1px;top:779px;width:1590px;height:1px;background:#d6d6d6"></div>
<div class="a" style="left:1px;top:780px;width:1590px;height:36px;background:#f3f3f3"></div>
<div class="a" style="left:1px;top:782px;width:878px;height:34px;background:#fff;border:1px solid #dedede;border-left:none"></div>
<div class="t" style="left:6px;top:786px;font-size:10px;color:#222">命令：*取消*</div>
<div class="t" style="left:6px;top:800.5px;font-size:10px;color:#222">命令：*取消*</div>
<div class="a" style="left:864px;top:784px;width:13px;height:14px;background:#fff;border:1px solid #cfc6b8"></div>
<svg style="left:867px;top:789px" width="7" height="4"><path d="M0,4 L7,4 L3.5,0 Z" fill="#111"/></svg>
<div class="a" style="left:864px;top:800px;width:13px;height:14px;background:#fff;border:1px solid #cfc6b8"></div>
<svg style="left:867px;top:805px" width="7" height="4"><path d="M0,0 L7,0 L3.5,4 Z" fill="#111"/></svg>
<div class="a" style="left:1px;top:816px;width:1590px;height:14px;background:#fff;border-top:2px solid #dadada"></div>
<div class="a" style="left:36px;top:818px;width:1px;height:12px;background:#ccc"></div>
<div class="t" style="left:6px;top:822px;font-size:10px;color:#222">命令：</div>
<div class="a" style="left:498px;top:818px;width:58px;height:12px;background:#c9c9c9"></div>
<div class="t" style="left:506px;top:823px;font-size:10px;color:#222">命令搜索</div>
<div class="a" style="left:565px;top:818px;width:39px;height:12px;background:#d2d2d2"></div>
<div class="a" style="left:572px;top:823px;width:13px;height:8px;background:#fff;border:1px solid #444;border-bottom:none"></div>
<svg style="left:573px;top:824px" width="10" height="6"><path d="M1,3 L4,6 L9,0" fill="none" stroke="#111" stroke-width="1.3"/></svg>
<div class="t" style="left:588px;top:823px;font-size:10px;color:#d02020">弹</div>
<div class="a" style="left:607px;top:818px;width:206px;height:12px;background:#c9c9c9"></div>
<div class="a" style="left:628px;top:820px;width:185px;height:10px;background:#e9e9e9"></div>
<svg style="left:612px;top:821px" width="12" height="10"><path d="M2,10 L9,3 L11,5 L4,12" fill="none" stroke="#777" stroke-width="1"/></svg>
<div class="a" style="left:813px;top:818px;width:66px;height:12px;background:#c9c9c9"></div>
<div class="t" style="left:820px;top:823px;font-size:10px;color:#222">发表</div>
<div class="t" style="left:853px;top:823px;font-size:10px;color:#222">弹窗</div>
<svg style="left:0;top:0" width="1591" height="830" viewBox="0 0 1591 830">
<path d="M887,790.5 H909 M887,807 H909" stroke="#777" stroke-width="1"/>
<rect x="887.5" y="797" width="5.5" height="4" rx="1" fill="#8cc6f4" stroke="#5aaee6" stroke-width="0.8"/><rect x="895" y="797" width="5.5" height="4" rx="1" fill="#8cc6f4" stroke="#5aaee6" stroke-width="0.8"/><rect x="902.5" y="797" width="5.5" height="4" rx="1" fill="#8cc6f4" stroke="#5aaee6" stroke-width="0.8"/>
</svg>
<div class="a" style="left:913px;top:789px;width:148px;height:20px;background:#ebebeb;border:1px solid #c4c4c4"></div>
<svg style="left:1050px;top:797px" width="6" height="4"><path d="M0.5,0.5 L3,3 L5.5,0.5" fill="none" stroke="#444" stroke-width="1.1"/></svg>
<div class="a" style="left:918px;top:793px;width:10px;height:9px;background:#fff"></div>
<div class="t" style="left:931px;top:792px;font-size:11px;color:#4a84c4">A-SLAB</div>
<div class="a" style="left:1066px;top:789px;width:74px;height:20px;background:#ebebeb;border:1px solid #c4c4c4"></div>
<svg style="left:1129px;top:797px" width="6" height="4"><path d="M0.5,0.5 L3,3 L5.5,0.5" fill="none" stroke="#444" stroke-width="1.1"/></svg>
<div class="a" style="left:1070px;top:793px;width:10px;height:9px;background:#fff"></div>
<div class="t" style="left:1084px;top:792px;font-size:11px;color:#4a84c4">ByLayer</div>
<div class="a" style="left:1144px;top:789px;width:129px;height:20px;background:#ebebeb;border:1px solid #c4c4c4"></div>
<svg style="left:1262px;top:797px" width="6" height="4"><path d="M0.5,0.5 L3,3 L5.5,0.5" fill="none" stroke="#444" stroke-width="1.1"/></svg>
<div class="a" style="left:1149px;top:798px;width:57px;height:1px;background:#444"></div>
<div class="t" style="left:1209px;top:792px;font-size:11px;color:#4a84c4">ByLayer</div>
<div class="a" style="left:1278px;top:789px;width:99px;height:20px;background:#ebebeb;border:1px solid #c4c4c4"></div>
<svg style="left:1366px;top:797px" width="6" height="4"><path d="M0.5,0.5 L3,3 L5.5,0.5" fill="none" stroke="#444" stroke-width="1.1"/></svg>
<div class="a" style="left:1282px;top:798px;width:36px;height:1px;background:#444"></div>
<div class="t" style="left:1322px;top:792px;font-size:11px;color:#4a84c4">ByLayer</div>
<svg style="left:1384px;top:787px" width="24" height="24" viewBox="0 0 24 24">
<text x="1" y="22" font-size="24" font-weight="bold" font-family="Liberation Serif" fill="#3a3e48">T</text>
<path d="M12.5,18.5 L19,5.5 Q20.5,3.8 22.5,4.8 Q24.2,6.2 23,8.3 L16.3,20.5 Z" fill="#ee9a3a"/><path d="M12.3,18.3 Q10.2,20.5 10.8,23.3 Q14.5,22.8 16.5,20.7 Z" fill="#c87018"/>
</svg>
<div class="a" style="left:1411px;top:789px;width:57px;height:20px;background:#ebebeb;border:1px solid #c4c4c4"></div>
<svg style="left:1457px;top:797px" width="6" height="4"><path d="M0.5,0.5 L3,3 L5.5,0.5" fill="none" stroke="#444" stroke-width="1.1"/></svg>
<div class="t" style="left:1416px;top:792px;font-size:11px;color:#4a84c4">3号字</div>
<svg style="left:1475px;top:788px" width="24" height="22" viewBox="0 0 24 22">
<path d="M1,8 V21 M23,8 V21 M1,12 H23 M1,17 H23" stroke="#888" stroke-width="1.6" fill="none"/>
<path d="M3,12 H21 V17 H3 Z" fill="#fff"/>
<path d="M1,8 V21 M23,8 V21" stroke="#888" stroke-width="2"/>
<path d="M6,11 Q6,7 8,6 Q9,2 12,3 Q15,2 16,6 Q18,7 18,11 Z" fill="#6cc070" stroke="#4a9a50" stroke-width="0.8"/><circle cx="12" cy="8" r="2" fill="#fff"/>
<path d="M8,11 H16" stroke="#888" stroke-width="1.5"/>
</svg>
<div class="a" style="left:1503px;top:789px;width:88px;height:20px;background:#ebebeb;border:1px solid #c4c4c4"></div>
<svg style="left:1580px;top:797px" width="6" height="4"><path d="M0.5,0.5 L3,3 L5.5,0.5" fill="none" stroke="#444" stroke-width="1.1"/></svg>
<div class="t" style="left:1507px;top:792px;font-size:11px;color:#4a84c4">DIM_50_50</div>
<svg style="left:0;top:0" width="1591" height="830" viewBox="0 0 1591 830">
<g fill="none" stroke="#888" stroke-width="1.2">
<path d="M890,830 V826 Q890,822 893,821 L895,818 L901,818 L903,821 Q906,822 906,826 V830"/><circle cx="898" cy="829" r="3"/>
<path d="M922,823 L932,818 L942,823 L932,828 Z M922,827 L932,832 L942,827" fill="#eee"/>
<rect x="958" y="825" width="5" height="5"/><rect x="966" y="825" width="5" height="5"/><rect x="972" y="818" width="6" height="6"/><path d="M963,827 H966 M971,827 L974,824"/>
<path d="M994,830 Q992,823 999,822 L1003,822 M1001,820 L1004,822 L1001,824"/><circle cx="999" cy="829" r="3"/>
<rect x="1025" y="819" width="18" height="11"/><path d="M1034,819 V830 M1038,819 V830"/>
<rect x="1058" y="820" width="7" height="6"/><path d="M1068,820 H1077 M1068,826 H1077 M1058,830 H1077"/>
<path d="M1093,830 V822 L1100,819 L1106,819 L1112,825 V830"/><path d="M1095,823 H1101 L1098,820 M1101,823 L1098,826" stroke="#4caf50"/>
<rect x="1125" y="819" width="20" height="12" rx="2" fill="#eaf2fb" stroke="#8a96a8"/><path d="M1131,831 L1139,821" stroke="#3a80d0" stroke-width="1.5"/>
<rect x="1163" y="822" width="13" height="5" rx="2.5"/><path d="M1160,830 L1168,826" /><circle cx="1178" cy="826" r="3" stroke="#e04040"/>
<rect x="1193" y="819" width="21" height="12" rx="2" fill="#f0f0f0" stroke="#888"/><path d="M1199,830 L1207,822" stroke="#d9a030" stroke-width="2.5"/>
<path d="M1228,824 H1244 M1228,820 H1242 V830 M1244,824 V830"/>
<path d="M1266,830 L1276,820 L1280,824 L1270,834" />
<path d="M1297,825 Q1297,820 1306,820 Q1315,820 1315,825 V830 M1295,826 H1317"/>
<path d="M1330,820 H1350 V830 M1330,820 V830 M1340,820 V830" stroke="#444" stroke-width="1.6"/>
</g>
</svg>
<div class="t" style="left:1546px;top:822px;font-size:11.5px;color:#222">V5-2.41</div>

<!-- BOTTOM END -->

</body></html>
